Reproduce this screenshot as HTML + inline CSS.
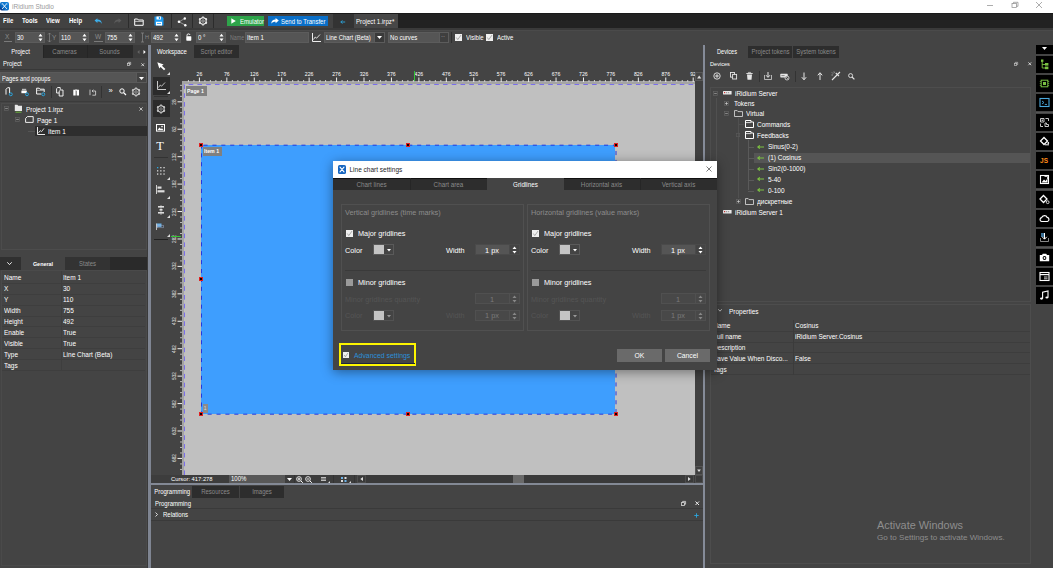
<!DOCTYPE html>
<html><head><meta charset="utf-8"><title>iRidium Studio</title>
<style>
html,body{margin:0;padding:0;}
body{width:1053px;height:568px;overflow:hidden;position:relative;background:#444;font-family:"Liberation Sans",sans-serif;}
div,span.t,svg{position:absolute;display:block;box-sizing:border-box;}
span.t{white-space:pre;}
svg{overflow:visible;}
</style></head><body>
<div style="left:0px;top:0px;width:1053px;height:13px;background:#ffffff;"></div>
<svg style="left:0;top:2px" width="9" height="8.6" viewBox="0 0 9 8.6"><defs><linearGradient id="lg1" x1="1" y1="0" x2="0" y2="1"><stop offset="0" stop-color="#1283dc"/><stop offset="0.65" stop-color="#0a6cc4"/><stop offset="1" stop-color="#0a1f6e"/></linearGradient></defs><rect x="0" y="0" width="9" height="8.6" rx="1.8" fill="url(#lg1)"/><path d="M2.4 1.8 L6.6 6.6 M6.6 1.8 L2.4 6.6" stroke="#fff" stroke-width="0.9" stroke-linecap="round"/><path d="M1.8 2.4 L3 1.2 M6 1.2 L7.2 2.4 M5.9 7.2 L7.2 5.9" stroke="#cfe6fa" stroke-width="0.6"/></svg>
<span class="t" style="left:12px;top:2.5px;font-size:6.5px;line-height:8px;color:#9a9a9a;">iRidium Studio</span>
<svg style="left:986.5px;top:1.2px;" width="60" height="8" viewBox="0 0 60 8"><path d="M0 4.5h6" stroke="#8a8a8a" stroke-width="0.7" fill="none"/><rect x="25" y="2.5" width="4.5" height="4" stroke="#8a8a8a" stroke-width="0.7" fill="none"/><path d="M26.5 2.5v-1.2h4.5v4h-1.5" stroke="#8a8a8a" stroke-width="0.7" fill="none"/><path d="M49 1l6 6M55 1l-6 6" stroke="#8a8a8a" stroke-width="0.7" fill="none"/></svg>
<div style="left:0px;top:13px;width:1053px;height:17px;background:#222222;"></div>
<div style="left:0px;top:13px;width:1053px;height:1px;background:#1a1a1a;"></div>
<div style="left:0px;top:14px;width:333px;height:15px;background:#424242;"></div>
<div style="left:333px;top:14px;width:21px;height:14px;background:#333333;"></div>
<div style="left:354px;top:14px;width:44px;height:14px;background:#474747;"></div>
<div style="left:0px;top:28px;width:1053px;height:2px;background:#3a3a3a;"></div>
<span class="t" style="left:3px;top:17.0px;font-size:6.5px;line-height:8px;color:#ffffff;font-weight:700;transform:scaleX(0.93);transform-origin:left center;">File</span>
<span class="t" style="left:22px;top:17.0px;font-size:6.5px;line-height:8px;color:#ffffff;font-weight:700;transform:scaleX(0.93);transform-origin:left center;">Tools</span>
<span class="t" style="left:46px;top:17.0px;font-size:6.5px;line-height:8px;color:#ffffff;font-weight:700;transform:scaleX(0.93);transform-origin:left center;">View</span>
<span class="t" style="left:69px;top:17.0px;font-size:6.5px;line-height:8px;color:#ffffff;font-weight:700;transform:scaleX(0.93);transform-origin:left center;">Help</span>
<svg style="left:94px;top:18px;" width="9" height="6.5" viewBox="0 0 12 9"><path d="M0.5 3.5 L4.5 0.3 V2.2 C8 2.2 10.5 4 10.8 8.2 C9.5 5.8 7.5 5 4.5 5 V6.8 Z" fill="#3daee9"/></svg>
<svg style="left:113px;top:18px;" width="9" height="6.5" viewBox="0 0 12 9"><path d="M11.5 3.5 L7.5 0.3 V2.2 C4 2.2 1.5 4 1.2 8.2 C2.5 5.8 4.5 5 7.5 5 V6.8 Z" fill="#5c5c5c"/></svg>
<div style="left:128px;top:14px;width:1px;height:14px;background:#2c2c2c;"></div>
<svg style="left:134px;top:17.5px;" width="10" height="8" viewBox="0 0 10 8"><path d="M0.7 7.3 V1 H3.6 L4.4 2 H9.2 V7.3 Z" fill="none" stroke="#fff" stroke-width="1" stroke-linejoin="round"/><path d="M0.7 3.4 H9.2" stroke="#ddd" stroke-width="0.8"/></svg>
<svg style="left:154px;top:16px;" width="10" height="10" viewBox="0 0 10 10"><path d="M0.5 0.5 H8 L9.5 2 V9.5 H0.5 Z" fill="#1e9bf0"/><rect x="2.5" y="0.5" width="4.5" height="3" fill="#fff"/><rect x="4.8" y="1" width="1.3" height="2" fill="#1e9bf0"/><rect x="2" y="5.8" width="6" height="3.7" fill="#fff"/><rect x="3" y="7" width="4" height="0.8" fill="#1e9bf0"/></svg>
<div style="left:171px;top:14px;width:1px;height:14px;background:#2c2c2c;"></div>
<svg style="left:176.5px;top:16.5px;" width="11" height="10" viewBox="0 0 11 10"><path d="M2 4.8 L7.6 1.6 M2 4.8 L8 8" stroke="#ccc" stroke-width="0.6"/><circle cx="2" cy="4.8" r="1.3" fill="#fff"/><circle cx="7.8" cy="1.5" r="1.2" fill="#fff"/><circle cx="8.3" cy="8.2" r="1.2" fill="#fff"/></svg>
<div style="left:192px;top:14px;width:1px;height:14px;background:#2c2c2c;"></div>
<svg style="left:198px;top:16px;" width="10" height="10" viewBox="0 0 10 10"><path d="M8.03 6.75L8.90 7.25M5.00 8.50L5.00 9.50M1.97 6.75L1.10 7.25M1.97 3.25L1.10 2.75M5.00 1.50L5.00 0.50M8.03 3.25L8.90 2.75" stroke="#fff" stroke-width="1.5"/><circle cx="5" cy="5" r="3.2" fill="none" stroke="#fff" stroke-width="1.05"/><circle cx="5" cy="5" r="1.25" fill="none" stroke="#fff" stroke-width="0.6" stroke-opacity="0.85"/></svg>
<div style="left:213px;top:14px;width:1px;height:14px;background:#2c2c2c;"></div>
<div style="left:227px;top:16px;width:37px;height:10px;background:#2ea44a;"></div>
<svg style="left:231px;top:18px;" width="5" height="6" viewBox="0 0 5 6"><path d="M0.3 0.2 L4.8 3 L0.3 5.8 Z" fill="#fff"/></svg>
<span class="t" style="left:240px;top:17.5px;font-size:6.4px;line-height:8px;color:#ffffff;transform:scaleX(0.94);transform-origin:left center;">Emulator</span>
<div style="left:268px;top:16px;width:60px;height:10px;background:#0a6fc8;"></div>
<svg style="left:271px;top:18px;" width="8" height="6" viewBox="0 0 8 6"><path d="M7.8 2.6 L4.6 0 V1.6 C2 1.6 0.4 3 0.2 5.8 C1.2 4.2 2.6 3.7 4.6 3.7 V5.3 Z" fill="#fff"/></svg>
<span class="t" style="left:281px;top:17.5px;font-size:6.4px;line-height:8px;color:#ffffff;transform:scaleX(0.94);transform-origin:left center;">Send to Transfer</span>
<svg style="left:339.5px;top:19.5px;" width="5.5" height="4" viewBox="0 0 5.5 4"><path d="M5.2 2 H0.8 M2.4 0.4 L0.8 2 L2.4 3.6" stroke="#2aa7e0" stroke-width="0.9" fill="none"/></svg>
<span class="t" style="left:356px;top:17.0px;font-size:6.7px;line-height:9px;color:#ffffff;transform:scaleX(0.92);transform-origin:left center;">Project 1.irpz*</span>
<div style="left:0px;top:30px;width:1053px;height:15px;background:#444444;"></div>
<div style="left:0px;top:30px;width:1053px;height:1px;background:#4a4a4a;"></div>
<span class="t" style="left:5px;top:33.0px;font-size:6.5px;line-height:8px;color:#8a8a8a;">X</span>
<div style="left:4px;top:41px;width:8px;height:1px;background:#7a7a7a;"></div>
<div style="left:15px;top:32px;width:30px;height:11px;background:#555555;border:1px solid #5c5c5c;"></div>
<span class="t" style="left:17px;top:34.4px;font-size:6.6px;line-height:8px;color:#ffffff;transform:scaleX(0.92);transform-origin:left center;">30</span>
<svg style="left:38px;top:33px;" width="5" height="9" viewBox="0 0 5 9"><path d="M0.5 3.4 L2.5 0.8 L4.5 3.4 Z M0.5 5.6 L2.5 8.2 L4.5 5.6 Z" fill="#fff"/></svg>
<svg style="left:48px;top:33px;" width="3" height="9" viewBox="0 0 3 9"><path d="M1.5 0v9M0 1.5L1.5 0L3 1.5M0 7.5L1.5 9L3 7.5" stroke="#8a8a8a" stroke-width="0.7" fill="none"/></svg>
<span class="t" style="left:52px;top:33.5px;font-size:6.5px;line-height:8px;color:#8a8a8a;">Y</span>
<div style="left:59px;top:32px;width:30px;height:11px;background:#555555;border:1px solid #5c5c5c;"></div>
<span class="t" style="left:61px;top:34.4px;font-size:6.6px;line-height:8px;color:#ffffff;transform:scaleX(0.92);transform-origin:left center;">110</span>
<svg style="left:82px;top:33px;" width="5" height="9" viewBox="0 0 5 9"><path d="M0.5 3.4 L2.5 0.8 L4.5 3.4 Z M0.5 5.6 L2.5 8.2 L4.5 5.6 Z" fill="#fff"/></svg>
<span class="t" style="left:95px;top:32.5px;font-size:6.5px;line-height:8px;color:#8a8a8a;">W</span>
<div style="left:94px;top:41px;width:9px;height:1px;background:#7a7a7a;"></div>
<div style="left:105px;top:32px;width:30px;height:11px;background:#555555;border:1px solid #5c5c5c;"></div>
<span class="t" style="left:107px;top:34.4px;font-size:6.6px;line-height:8px;color:#ffffff;transform:scaleX(0.92);transform-origin:left center;">755</span>
<svg style="left:128px;top:33px;" width="5" height="9" viewBox="0 0 5 9"><path d="M0.5 3.4 L2.5 0.8 L4.5 3.4 Z M0.5 5.6 L2.5 8.2 L4.5 5.6 Z" fill="#fff"/></svg>
<svg style="left:141px;top:33px;" width="3" height="9" viewBox="0 0 3 9"><path d="M1.5 0v9M0 0h3M0 9h3" stroke="#8a8a8a" stroke-width="0.7" fill="none"/></svg>
<span class="t" style="left:145px;top:34.0px;font-size:5.5px;line-height:7px;color:#8a8a8a;">H</span>
<div style="left:151px;top:32px;width:30px;height:11px;background:#555555;border:1px solid #5c5c5c;"></div>
<span class="t" style="left:153px;top:34.4px;font-size:6.6px;line-height:8px;color:#ffffff;transform:scaleX(0.92);transform-origin:left center;">492</span>
<svg style="left:174px;top:33px;" width="5" height="9" viewBox="0 0 5 9"><path d="M0.5 3.4 L2.5 0.8 L4.5 3.4 Z M0.5 5.6 L2.5 8.2 L4.5 5.6 Z" fill="#fff"/></svg>
<svg style="left:186px;top:34px;" width="6" height="7" viewBox="0 0 6 7"><rect x="0.3" y="2.2" width="5" height="4.5" rx="0.6" fill="#fff"/><path d="M1 2.4 V1.4 A1.4 1.2 0 0 1 4 1 " stroke="#fff" stroke-width="0.9" fill="none"/></svg>
<div style="left:196px;top:32px;width:30px;height:11px;background:#555555;border:1px solid #5c5c5c;"></div>
<span class="t" style="left:198px;top:34.4px;font-size:6.6px;line-height:8px;color:#ffffff;transform:scaleX(0.92);transform-origin:left center;">0 °</span>
<svg style="left:219px;top:33px;" width="5" height="9" viewBox="0 0 5 9"><path d="M0.5 3.4 L2.5 0.8 L4.5 3.4 Z M0.5 5.6 L2.5 8.2 L4.5 5.6 Z" fill="#fff"/></svg>
<span class="t" style="left:229.5px;top:33.8px;font-size:6.3px;line-height:8px;color:#7c7c7c;transform:scaleX(0.84);transform-origin:left center;">Name</span>
<div style="left:245px;top:32px;width:64px;height:11px;background:#555555;border:1px solid #5c5c5c;"></div>
<span class="t" style="left:247px;top:34.2px;font-size:6.6px;line-height:8px;color:#ffffff;transform:scaleX(0.92);transform-origin:left center;">Item 1</span>
<svg style="left:312px;top:33px;" width="9" height="9" viewBox="0 0 9 9"><path d="M0.5 0 V8.5 H9" stroke="#fff" stroke-width="0.9" fill="none"/><path d="M1.5 6.5 L3.2 4 L4.6 5.2 L8 1.5" stroke="#fff" stroke-width="0.8" fill="none"/></svg>
<div style="left:324px;top:32px;width:61px;height:11px;background:#555555;border:1px solid #5c5c5c;"></div>
<span class="t" style="left:325.5px;top:34.2px;font-size:6.4px;line-height:8px;color:#ffffff;transform:scaleX(0.92);transform-origin:left center;">Line Chart (Beta)</span>
<div style="left:374px;top:32px;width:11px;height:11px;background:#3a3a3a;border:1px solid #5c5c5c;"></div>
<svg style="left:377px;top:36px;" width="5" height="3" viewBox="0 0 5 3"><path d="M0 0 H5 L2.5 3 Z" fill="#fff"/></svg>
<div style="left:388px;top:32px;width:61px;height:11px;background:#555555;border:1px solid #5c5c5c;"></div>
<span class="t" style="left:390px;top:34.2px;font-size:6.6px;line-height:8px;color:#ffffff;transform:scaleX(0.92);transform-origin:left center;">No curves</span>
<div style="left:439px;top:32px;width:10px;height:11px;background:#3f3f3f;border:1px solid #5c5c5c;"></div>
<span class="t" style="left:441px;top:33.0px;font-size:6.4px;line-height:8px;color:#aaaaaa;transform:scaleX(0.94);transform-origin:left center;">··</span>
<div style="left:451px;top:32px;width:1px;height:11px;background:#303030;"></div>
<div style="left:455px;top:33.5px;width:7px;height:7px;background:#f0f0f0;"></div>
<svg style="left:455px;top:33.5px;" width="7" height="7" viewBox="0 0 7 7"><path d="M1.3 3.5 L2.8000000000000003 5.6000000000000005 L6 1.05" stroke="#999" stroke-width="0.8" fill="none"/></svg>
<span class="t" style="left:466px;top:34.0px;font-size:6.4px;line-height:8px;color:#ffffff;transform:scaleX(0.94);transform-origin:left center;">Visible</span>
<div style="left:486px;top:33.5px;width:7px;height:7px;background:#f0f0f0;"></div>
<svg style="left:486px;top:33.5px;" width="7" height="7" viewBox="0 0 7 7"><path d="M1.3 3.5 L2.8000000000000003 5.6000000000000005 L6 1.05" stroke="#999" stroke-width="0.8" fill="none"/></svg>
<span class="t" style="left:497px;top:34.0px;font-size:6.4px;line-height:8px;color:#ffffff;transform:scaleX(0.94);transform-origin:left center;">Active</span>
<div style="left:0px;top:45px;width:1053px;height:1px;background:#3e3e3e;"></div>
<div style="left:0px;top:45px;width:148px;height:13px;background:#2b2b2b;"></div>
<div style="left:0px;top:45px;width:43px;height:13px;background:#444444;"></div>
<div style="left:43px;top:45px;width:1px;height:13px;background:#252525;"></div>
<div style="left:87px;top:45px;width:1px;height:13px;background:#252525;"></div>
<span class="t" style="left:-1px;top:48.0px;font-size:6.4px;line-height:8px;color:#ffffff;width:43px;text-align:center;transform:scaleX(0.94);transform-origin:center center;">Project</span>
<span class="t" style="left:43px;top:48.0px;font-size:6.4px;line-height:8px;color:#8a8a8a;width:43px;text-align:center;transform:scaleX(0.94);transform-origin:center center;">Cameras</span>
<span class="t" style="left:87px;top:48.0px;font-size:6.4px;line-height:8px;color:#8a8a8a;width:45px;text-align:center;transform:scaleX(0.94);transform-origin:center center;">Sounds</span>
<div style="left:133px;top:45px;width:15px;height:13px;background:#3c3c3c;"></div>
<svg style="left:137px;top:50px;" width="3" height="4" viewBox="0 0 3 4"><path d="M2.5 0 L0.3 2 L2.5 4 Z" fill="#666"/></svg>
<svg style="left:143px;top:50px;" width="3" height="4" viewBox="0 0 3 4"><path d="M0.5 0 L2.7 2 L0.5 4 Z" fill="#fff"/></svg>
<span class="t" style="left:3px;top:60.0px;font-size:6.4px;line-height:8px;color:#ffffff;transform:scaleX(0.94);transform-origin:left center;">Project</span>
<svg style="left:126.5px;top:62px;" width="4" height="4" viewBox="0 0 5 5"><rect x="0.4" y="1.6" width="3" height="2.8" fill="none" stroke="#ddd" stroke-width="0.8"/><path d="M1.6 1.6 V0.4 H4.6 V3.2 H3.4" fill="none" stroke="#ddd" stroke-width="0.8"/></svg>
<svg style="left:141px;top:62.5px;" width="3.5" height="3.5" viewBox="0 0 4.5 4.5"><path d="M0.5 0.5 L4 4 M4 0.5 L0.5 4" stroke="#eee" stroke-width="1" fill="none"/></svg>
<div style="left:0px;top:69px;width:148px;height:1px;background:#383838;"></div>
<div style="left:0px;top:72px;width:147px;height:11px;background:#555555;border:1px solid #5a5a5a;"></div>
<span class="t" style="left:1.5px;top:74.5px;font-size:6.3px;line-height:8px;color:#ffffff;transform:scaleX(0.92);transform-origin:left center;">Pages and popups</span>
<div style="left:136px;top:72px;width:11px;height:11px;background:#444;border:1px solid #5a5a5a;"></div>
<svg style="left:139px;top:77px;" width="5" height="3" viewBox="0 0 5 3"><path d="M0 0 H5 L2.5 3 Z" fill="#fff"/></svg>
<svg style="left:4.5px;top:87px;" width="9" height="10" viewBox="0 0 9 10"><path d="M1 7.6 V2.3 L2.6 0.7 H4.6 V6" fill="none" stroke="#fff" stroke-width="0.95"/><circle cx="5.8" cy="7.3" r="1.45" fill="#444" stroke="#2aa7e0" stroke-width="1"/></svg>
<svg style="left:20px;top:87px;" width="10" height="10" viewBox="0 0 10 10"><rect x="2" y="1.8" width="4.2" height="1.6" fill="#bbb"/><rect x="1.4" y="3.6" width="5.4" height="2.6" fill="#fff"/><circle cx="7" cy="7.3" r="1.45" fill="#444" stroke="#2aa7e0" stroke-width="1"/></svg>
<svg style="left:36px;top:87px;" width="11" height="10" viewBox="0 0 11 10"><path d="M0.6 7 V1.2 H3.2 L4 2.2 H8.2 V5" fill="none" stroke="#fff" stroke-width="0.95"/><path d="M0.6 3.3 H8.2" stroke="#ddd" stroke-width="0.7"/><path d="M0.6 7 H5.4" stroke="#fff" stroke-width="0.95"/><circle cx="7.3" cy="7.3" r="1.45" fill="#444" stroke="#2aa7e0" stroke-width="1"/></svg>
<div style="left:51px;top:86px;width:1px;height:12px;background:#333;"></div>
<svg style="left:55.5px;top:87.3px;" width="9" height="10" viewBox="0 0 9 10"><path d="M0.6 6 V1.6 L1.8 0.5 H4.2 V2.6" fill="none" stroke="#fff" stroke-width="0.9"/><path d="M3.2 9 V4.2 L4.4 3 H7 V9 Z" fill="#444" stroke="#fff" stroke-width="0.9"/><path d="M0.6 6 H3" stroke="#fff" stroke-width="0.9"/></svg>
<svg style="left:73px;top:88.5px;" width="7" height="7" viewBox="0 0 7 7"><path d="M0.3 6.4 V0.8 H2.7 V6.4 Z M3.6 6.4 V0.8 H6 V6.4 Z" fill="#fff"/><path d="M2.2 0.4 H4.2 V2 H2.2 Z" fill="#ddd"/></svg>
<svg style="left:88.5px;top:88.5px;" width="8" height="7" viewBox="0 0 8 7"><path d="M1 0.6 V6.2" stroke="#ddd" stroke-width="0.8"/><path d="M3 2 H6.6 V6.2 H3.4" fill="none" stroke="#ddd" stroke-width="0.8"/><path d="M4.4 0.6 L3 2 L4.4 3.4" fill="none" stroke="#ddd" stroke-width="0.7"/></svg>
<div style="left:101px;top:86px;width:1px;height:12px;background:#333;"></div>
<span class="t" style="left:108.5px;top:86.3px;font-size:7.6px;line-height:10px;color:#ffffff;">»</span>
<svg style="left:119px;top:88px;" width="8" height="8" viewBox="0 0 8 8"><circle cx="3" cy="3" r="2.2" fill="none" stroke="#fff" stroke-width="1"/><path d="M4.6 4.6 L7 7" stroke="#fff" stroke-width="1.3"/></svg>
<svg style="left:131px;top:87px;" width="10" height="10" viewBox="0 0 10 10"><path d="M8.03 6.75L8.90 7.25M5.00 8.50L5.00 9.50M1.97 6.75L1.10 7.25M1.97 3.25L1.10 2.75M5.00 1.50L5.00 0.50M8.03 3.25L8.90 2.75" stroke="#ddd" stroke-width="1.5"/><circle cx="5" cy="5" r="3.2" fill="none" stroke="#ddd" stroke-width="1.05"/><circle cx="5" cy="5" r="1.25" fill="none" stroke="#ddd" stroke-width="0.6" stroke-opacity="0.85"/></svg>
<div style="left:0px;top:101px;width:148px;height:1px;background:#3b3b3b;"></div>
<div style="left:1px;top:103px;width:146px;height:147px;border:1px solid #4c4c4c;"></div>
<svg style="left:4px;top:106px;" width="5" height="5" viewBox="0 0 5 5"><rect x="0.4" y="0.4" width="4.2" height="4.2" fill="none" stroke="#666" stroke-width="0.6"/><path d="M1.2 2.5 H3.8" stroke="#999" stroke-width="0.8"/></svg>
<svg style="left:14px;top:104px;" width="9" height="9" viewBox="0 0 9 9"><path d="M0.8 7 V0.8 H3.4 L4.2 1.8 H8 V7 Z" fill="#e8e8e8"/><path d="M1.5 8.2 H7.5" stroke="#6cbf3a" stroke-width="0.9"/></svg>
<span class="t" style="left:26px;top:105.1px;font-size:6.8px;line-height:9px;color:#ffffff;transform:scaleX(0.94);transform-origin:left center;">Project 1.irpz</span>
<svg style="left:139px;top:107px;" width="4" height="4" viewBox="0 0 4 4"><path d="M0.4 0.4 L3.6 3.6 M3.6 0.4 L0.4 3.6" stroke="#ddd" stroke-width="0.8"/></svg>
<svg style="left:15px;top:117px;" width="5" height="5" viewBox="0 0 5 5"><rect x="0.4" y="0.4" width="4.2" height="4.2" fill="none" stroke="#666" stroke-width="0.6"/><path d="M1.2 2.5 H3.8" stroke="#999" stroke-width="0.8"/></svg>
<svg style="left:25px;top:116px;" width="9" height="7" viewBox="0 0 9 7"><path d="M0.6 6.4 V2.4 L2.4 0.6 H8.2 V6.4 Z" fill="none" stroke="#fff" stroke-width="0.9"/></svg>
<span class="t" style="left:37px;top:116.1px;font-size:6.8px;line-height:9px;color:#ffffff;transform:scaleX(0.94);transform-origin:left center;">Page 1</span>
<div style="left:35px;top:125.6px;width:112px;height:10.6px;background:#2e2e2e;"></div>
<div style="left:28px;top:131px;width:7px;height:1px;background:#555;"></div>
<svg style="left:37px;top:127px;" width="8" height="8" viewBox="0 0 8 8"><path d="M0.5 0 V7.5 H8" stroke="#fff" stroke-width="0.9" fill="none"/><path d="M1.5 5.8 L3.2 3.6 L4.6 4.6 L7 1.4" stroke="#fff" stroke-width="0.8" fill="none"/></svg>
<span class="t" style="left:48px;top:127.0px;font-size:6.8px;line-height:9px;color:#ffffff;transform:scaleX(0.94);transform-origin:left center;">Item 1</span>
<div style="left:147px;top:45px;width:1px;height:523px;background:#3a3a3a;"></div>
<div style="left:148px;top:45px;width:3px;height:523px;background:#7f8592;"></div>
<div style="left:0px;top:257px;width:147px;height:13px;background:#2a2a2a;"></div>
<div style="left:0px;top:257px;width:21px;height:13px;background:#303030;"></div>
<svg style="left:7px;top:262px;" width="5" height="3" viewBox="0 0 5 3"><path d="M0.3 0.3 L2.5 2.6 L4.7 0.3" stroke="#fff" stroke-width="0.9" fill="none"/></svg>
<div style="left:21px;top:257px;width:44px;height:13px;background:#444444;"></div>
<span class="t" style="left:21px;top:259.7px;font-size:5.9px;line-height:8px;color:#ffffff;font-weight:700;width:44px;text-align:center;transform:scaleX(0.92);transform-origin:center center;">General</span>
<div style="left:65px;top:257px;width:45px;height:13px;background:#333333;"></div>
<span class="t" style="left:65px;top:259.5px;font-size:6.4px;line-height:8px;color:#8a8a8a;width:45px;text-align:center;transform:scaleX(0.94);transform-origin:center center;">States</span>
<span class="t" style="left:4px;top:272.9px;font-size:6.9px;line-height:9px;color:#ffffff;transform:scaleX(0.94);transform-origin:left center;">Name</span>
<span class="t" style="left:63px;top:272.9px;font-size:6.9px;line-height:9px;color:#ffffff;transform:scaleX(0.94);transform-origin:left center;">Item 1</span>
<div style="left:1px;top:283px;width:144px;height:1px;background:#3e3e3e;"></div>
<span class="t" style="left:4px;top:283.8px;font-size:6.9px;line-height:9px;color:#ffffff;transform:scaleX(0.94);transform-origin:left center;">X</span>
<span class="t" style="left:63px;top:283.8px;font-size:6.9px;line-height:9px;color:#ffffff;transform:scaleX(0.94);transform-origin:left center;">30</span>
<div style="left:1px;top:294px;width:144px;height:1px;background:#3e3e3e;"></div>
<span class="t" style="left:4px;top:294.8px;font-size:6.9px;line-height:9px;color:#ffffff;transform:scaleX(0.94);transform-origin:left center;">Y</span>
<span class="t" style="left:63px;top:294.8px;font-size:6.9px;line-height:9px;color:#ffffff;transform:scaleX(0.94);transform-origin:left center;">110</span>
<div style="left:1px;top:305px;width:144px;height:1px;background:#3e3e3e;"></div>
<span class="t" style="left:4px;top:305.8px;font-size:6.9px;line-height:9px;color:#ffffff;transform:scaleX(0.94);transform-origin:left center;">Width</span>
<span class="t" style="left:63px;top:305.8px;font-size:6.9px;line-height:9px;color:#ffffff;transform:scaleX(0.94);transform-origin:left center;">755</span>
<div style="left:1px;top:316px;width:144px;height:1px;background:#3e3e3e;"></div>
<span class="t" style="left:4px;top:316.7px;font-size:6.9px;line-height:9px;color:#ffffff;transform:scaleX(0.94);transform-origin:left center;">Height</span>
<span class="t" style="left:63px;top:316.7px;font-size:6.9px;line-height:9px;color:#ffffff;transform:scaleX(0.94);transform-origin:left center;">492</span>
<div style="left:1px;top:326px;width:144px;height:1px;background:#3e3e3e;"></div>
<span class="t" style="left:4px;top:327.6px;font-size:6.9px;line-height:9px;color:#ffffff;transform:scaleX(0.94);transform-origin:left center;">Enable</span>
<span class="t" style="left:63px;top:327.6px;font-size:6.9px;line-height:9px;color:#ffffff;transform:scaleX(0.94);transform-origin:left center;">True</span>
<div style="left:1px;top:337px;width:144px;height:1px;background:#3e3e3e;"></div>
<span class="t" style="left:4px;top:338.6px;font-size:6.9px;line-height:9px;color:#ffffff;transform:scaleX(0.94);transform-origin:left center;">Visible</span>
<span class="t" style="left:63px;top:338.6px;font-size:6.9px;line-height:9px;color:#ffffff;transform:scaleX(0.94);transform-origin:left center;">True</span>
<div style="left:1px;top:348px;width:144px;height:1px;background:#3e3e3e;"></div>
<span class="t" style="left:4px;top:349.5px;font-size:6.9px;line-height:9px;color:#ffffff;transform:scaleX(0.94);transform-origin:left center;">Type</span>
<span class="t" style="left:63px;top:349.5px;font-size:6.9px;line-height:9px;color:#ffffff;transform:scaleX(0.94);transform-origin:left center;">Line Chart (Beta)</span>
<div style="left:1px;top:359px;width:144px;height:1px;background:#3e3e3e;"></div>
<span class="t" style="left:4px;top:360.5px;font-size:6.9px;line-height:9px;color:#ffffff;transform:scaleX(0.94);transform-origin:left center;">Tags</span>
<span class="t" style="left:63px;top:360.5px;font-size:6.9px;line-height:9px;color:#ffffff;transform:scaleX(0.94);transform-origin:left center;"></span>
<div style="left:1px;top:370px;width:144px;height:1px;background:#3e3e3e;"></div>
<div style="left:61px;top:271px;width:1px;height:99px;background:#3e3e3e;"></div>
<div style="left:1px;top:270px;width:146px;height:296px;border:1px solid #4a4a4a;"></div>
<div style="left:151px;top:45px;width:552px;height:523px;background:#444444;"></div>
<div style="left:153px;top:45px;width:38px;height:13px;background:#444444;"></div>
<span class="t" style="left:153px;top:47.5px;font-size:6.4px;line-height:8px;color:#ffffff;width:38px;text-align:center;transform:scaleX(0.94);transform-origin:center center;">Workspace</span>
<div style="left:194px;top:45px;width:45px;height:13px;background:#2d2d2d;"></div>
<span class="t" style="left:194px;top:47.8px;font-size:6.4px;line-height:8px;color:#8a8a8a;width:45px;text-align:center;transform:scaleX(0.94);transform-origin:center center;">Script editor</span>
<svg style="left:157px;top:62px;" width="9" height="8.5" viewBox="0 0 9 8.5"><path d="M0.3 0.3 L6.6 2.4 L4.9 3.7 L8.4 7 L7 8.3 L3.6 4.9 L2.3 6.6 Z" fill="#fff"/></svg>
<svg style="left:167px;top:72px;" width="3" height="3" viewBox="0 0 3 3"><path d="M3 0 V3 H0 Z" fill="#ddd"/></svg>
<div style="left:152.5px;top:77px;width:17px;height:17.5px;background:#2b2b2b;"></div>
<svg style="left:157px;top:81px;" width="9" height="9" viewBox="0 0 9 9"><path d="M0.5 0 V8.5 H9" stroke="#ddd" stroke-width="0.9" fill="none"/><path d="M1.5 6.5 L3.2 4 L4.6 5.2 L8 1.5" stroke="#ddd" stroke-width="0.8" fill="none"/></svg>
<svg style="left:167px;top:91px;" width="3" height="3" viewBox="0 0 3 3"><path d="M3 0 V3 H0 Z" fill="#ddd"/></svg>
<div style="left:154px;top:96px;width:14px;height:1px;background:#333;"></div>
<div style="left:152.5px;top:100px;width:17px;height:17px;background:#2b2b2b;"></div>
<svg style="left:156px;top:103.7px;" width="10" height="10" viewBox="0 0 10 10"><path d="M8.03 6.75L8.90 7.25M5.00 8.50L5.00 9.50M1.97 6.75L1.10 7.25M1.97 3.25L1.10 2.75M5.00 1.50L5.00 0.50M8.03 3.25L8.90 2.75" stroke="#ddd" stroke-width="1.5"/><circle cx="5" cy="5" r="3.2" fill="none" stroke="#ddd" stroke-width="1.05"/><circle cx="5" cy="5" r="1.25" fill="none" stroke="#ddd" stroke-width="0.6" stroke-opacity="0.85"/></svg>
<svg style="left:156px;top:124px;" width="9" height="8" viewBox="0 0 9 8"><rect x="0.5" y="0.5" width="8" height="6.6" fill="none" stroke="#fff" stroke-width="1"/><path d="M1.5 6 L3.5 3.6 L5 5 L6 4.2 L7.5 6 Z" fill="#fff"/><circle cx="6" cy="2.6" r="0.8" fill="#fff"/></svg>
<span class="t" style="left:156.2px;top:139.0px;font-size:12.4px;line-height:15px;color:#ffffff;font-family:'Liberation Serif',serif;">T</span>
<div style="left:154px;top:157px;width:14px;height:1px;background:#333;"></div>
<svg style="left:157px;top:167px;" width="9" height="9" viewBox="0 0 9 9"><rect x="0.0" y="0.0" width="1.3" height="1.3" fill="#2aa7e0"/><rect x="3.2" y="0.0" width="1.3" height="1.3" fill="#ddd"/><rect x="6.4" y="0.0" width="1.3" height="1.3" fill="#ddd"/><rect x="0.0" y="3.2" width="1.3" height="1.3" fill="#ddd"/><rect x="3.2" y="3.2" width="1.3" height="1.3" fill="#ddd"/><rect x="6.4" y="3.2" width="1.3" height="1.3" fill="#ddd"/><rect x="0.0" y="6.4" width="1.3" height="1.3" fill="#ddd"/><rect x="3.2" y="6.4" width="1.3" height="1.3" fill="#ddd"/><rect x="6.4" y="6.4" width="1.3" height="1.3" fill="#ddd"/></svg>
<svg style="left:167px;top:177px;" width="3" height="3" viewBox="0 0 3 3"><path d="M3 0 V3 H0 Z" fill="#ddd"/></svg>
<svg style="left:156px;top:185px;" width="10" height="9" viewBox="0 0 10 9"><path d="M0.5 0 V9" stroke="#ddd" stroke-width="0.9"/><rect x="1.5" y="1.5" width="4" height="2.2" fill="#ddd"/><rect x="1.5" y="5.2" width="7" height="2.2" fill="#ddd"/></svg>
<svg style="left:167px;top:196px;" width="3" height="3" viewBox="0 0 3 3"><path d="M3 0 V3 H0 Z" fill="#ddd"/></svg>
<svg style="left:157px;top:204.5px;" width="8" height="10" viewBox="0 0 8 10"><rect x="1" y="1" width="6" height="1.6" fill="#ddd"/><rect x="2.5" y="4" width="3" height="1.6" fill="#ddd"/><rect x="1" y="7" width="6" height="1.6" fill="#ddd"/><path d="M4 0 V10" stroke="#ddd" stroke-width="0.6"/></svg>
<svg style="left:167px;top:215px;" width="3" height="3" viewBox="0 0 3 3"><path d="M3 0 V3 H0 Z" fill="#ddd"/></svg>
<svg style="left:156px;top:223px;" width="9" height="9" viewBox="0 0 9 9"><rect x="0.5" y="0.5" width="5" height="3.4" fill="#6db3e8"/><path d="M0.5 0.5 V7" stroke="#ddd" stroke-width="0.8"/><rect x="1.5" y="2.2" width="6" height="2.6" fill="none" stroke="#9ac" stroke-width="0.5"/></svg>
<svg style="left:167px;top:234px;" width="3" height="3" viewBox="0 0 3 3"><path d="M3 0 V3 H0 Z" fill="#ddd"/></svg>
<div style="left:154px;top:239px;width:14px;height:1px;background:#222;"></div>
<span class="t" style="left:189.4px;top:71.0px;font-size:5.2px;line-height:7px;color:#ffffff;width:20px;text-align:center;">26</span>
<span class="t" style="left:216.83px;top:71.0px;font-size:5.2px;line-height:7px;color:#ffffff;width:20px;text-align:center;">76</span>
<span class="t" style="left:244.26px;top:71.0px;font-size:5.2px;line-height:7px;color:#ffffff;width:20px;text-align:center;">126</span>
<span class="t" style="left:271.69px;top:71.0px;font-size:5.2px;line-height:7px;color:#ffffff;width:20px;text-align:center;">176</span>
<span class="t" style="left:299.12px;top:71.0px;font-size:5.2px;line-height:7px;color:#ffffff;width:20px;text-align:center;">226</span>
<span class="t" style="left:326.55px;top:71.0px;font-size:5.2px;line-height:7px;color:#ffffff;width:20px;text-align:center;">276</span>
<span class="t" style="left:353.98px;top:71.0px;font-size:5.2px;line-height:7px;color:#ffffff;width:20px;text-align:center;">326</span>
<span class="t" style="left:381.40999999999997px;top:71.0px;font-size:5.2px;line-height:7px;color:#ffffff;width:20px;text-align:center;">376</span>
<span class="t" style="left:408.84000000000003px;top:71.0px;font-size:5.2px;line-height:7px;color:#ffffff;width:20px;text-align:center;">426</span>
<span class="t" style="left:436.27px;top:71.0px;font-size:5.2px;line-height:7px;color:#ffffff;width:20px;text-align:center;">476</span>
<span class="t" style="left:463.70000000000005px;top:71.0px;font-size:5.2px;line-height:7px;color:#ffffff;width:20px;text-align:center;">526</span>
<span class="t" style="left:491.13px;top:71.0px;font-size:5.2px;line-height:7px;color:#ffffff;width:20px;text-align:center;">576</span>
<span class="t" style="left:518.56px;top:71.0px;font-size:5.2px;line-height:7px;color:#ffffff;width:20px;text-align:center;">626</span>
<span class="t" style="left:545.99px;top:71.0px;font-size:5.2px;line-height:7px;color:#ffffff;width:20px;text-align:center;">676</span>
<span class="t" style="left:573.42px;top:71.0px;font-size:5.2px;line-height:7px;color:#ffffff;width:20px;text-align:center;">726</span>
<span class="t" style="left:600.85px;top:71.0px;font-size:5.2px;line-height:7px;color:#ffffff;width:20px;text-align:center;">776</span>
<span class="t" style="left:628.28px;top:71.0px;font-size:5.2px;line-height:7px;color:#ffffff;width:20px;text-align:center;">826</span>
<span class="t" style="left:655.71px;top:71.0px;font-size:5.2px;line-height:7px;color:#ffffff;width:20px;text-align:center;">876</span>
<span class="t" style="left:683.14px;top:71.0px;font-size:5.2px;line-height:7px;color:#ffffff;width:20px;text-align:center;">92</span>
<div style="left:413.5px;top:71px;width:1px;height:11px;background:#35c435;"></div>
<span class="t" style="left:165px;top:97.8px;width:20px;height:8px;line-height:8px;font-size:4.8px;color:#e6e6e6;text-align:center;transform:rotate(-90deg);">28</span>
<span class="t" style="left:165px;top:125.2px;width:20px;height:8px;line-height:8px;font-size:4.8px;color:#e6e6e6;text-align:center;transform:rotate(-90deg);">82</span>
<span class="t" style="left:165px;top:152.7px;width:20px;height:8px;line-height:8px;font-size:4.8px;color:#e6e6e6;text-align:center;transform:rotate(-90deg);">132</span>
<span class="t" style="left:165px;top:180.1px;width:20px;height:8px;line-height:8px;font-size:4.8px;color:#e6e6e6;text-align:center;transform:rotate(-90deg);">182</span>
<span class="t" style="left:165px;top:207.5px;width:20px;height:8px;line-height:8px;font-size:4.8px;color:#e6e6e6;text-align:center;transform:rotate(-90deg);">232</span>
<span class="t" style="left:165px;top:234.9px;width:20px;height:8px;line-height:8px;font-size:4.8px;color:#e6e6e6;text-align:center;transform:rotate(-90deg);">282</span>
<span class="t" style="left:165px;top:262.4px;width:20px;height:8px;line-height:8px;font-size:4.8px;color:#e6e6e6;text-align:center;transform:rotate(-90deg);">332</span>
<span class="t" style="left:165px;top:289.8px;width:20px;height:8px;line-height:8px;font-size:4.8px;color:#e6e6e6;text-align:center;transform:rotate(-90deg);">382</span>
<span class="t" style="left:165px;top:317.2px;width:20px;height:8px;line-height:8px;font-size:4.8px;color:#e6e6e6;text-align:center;transform:rotate(-90deg);">432</span>
<span class="t" style="left:165px;top:344.7px;width:20px;height:8px;line-height:8px;font-size:4.8px;color:#e6e6e6;text-align:center;transform:rotate(-90deg);">482</span>
<span class="t" style="left:165px;top:372.1px;width:20px;height:8px;line-height:8px;font-size:4.8px;color:#e6e6e6;text-align:center;transform:rotate(-90deg);">532</span>
<span class="t" style="left:165px;top:399.5px;width:20px;height:8px;line-height:8px;font-size:4.8px;color:#e6e6e6;text-align:center;transform:rotate(-90deg);">582</span>
<span class="t" style="left:165px;top:427.0px;width:20px;height:8px;line-height:8px;font-size:4.8px;color:#e6e6e6;text-align:center;transform:rotate(-90deg);">632</span>
<span class="t" style="left:165px;top:454.4px;width:20px;height:8px;line-height:8px;font-size:4.8px;color:#e6e6e6;text-align:center;transform:rotate(-90deg);">682</span>
<div style="left:171px;top:236px;width:10px;height:1px;background:#35c435;"></div>
<div style="left:182px;top:81px;width:513px;height:394px;background:#a4a4a4;"></div>
<div style="left:184px;top:84px;width:511px;height:391px;background:#c0c0c0;"></div>
<svg style="left:0;top:0" width="1053" height="90"><rect x="187.93" y="80" width="1" height="2" fill="#cfcfcf"/><rect x="193.41" y="80" width="1" height="2" fill="#cfcfcf"/><rect x="198.90" y="77.5" width="1" height="4.5" fill="#f0f0f0"/><rect x="204.39" y="80" width="1" height="2" fill="#cfcfcf"/><rect x="209.87" y="80" width="1" height="2" fill="#cfcfcf"/><rect x="215.36" y="80" width="1" height="2" fill="#cfcfcf"/><rect x="220.85" y="80" width="1" height="2" fill="#cfcfcf"/><rect x="226.33" y="77.5" width="1" height="4.5" fill="#f0f0f0"/><rect x="231.82" y="80" width="1" height="2" fill="#cfcfcf"/><rect x="237.31" y="80" width="1" height="2" fill="#cfcfcf"/><rect x="242.79" y="80" width="1" height="2" fill="#cfcfcf"/><rect x="248.28" y="80" width="1" height="2" fill="#cfcfcf"/><rect x="253.77" y="77.5" width="1" height="4.5" fill="#f0f0f0"/><rect x="259.25" y="80" width="1" height="2" fill="#cfcfcf"/><rect x="264.74" y="80" width="1" height="2" fill="#cfcfcf"/><rect x="270.23" y="80" width="1" height="2" fill="#cfcfcf"/><rect x="275.71" y="80" width="1" height="2" fill="#cfcfcf"/><rect x="281.20" y="77.5" width="1" height="4.5" fill="#f0f0f0"/><rect x="286.69" y="80" width="1" height="2" fill="#cfcfcf"/><rect x="292.17" y="80" width="1" height="2" fill="#cfcfcf"/><rect x="297.66" y="80" width="1" height="2" fill="#cfcfcf"/><rect x="303.15" y="80" width="1" height="2" fill="#cfcfcf"/><rect x="308.63" y="77.5" width="1" height="4.5" fill="#f0f0f0"/><rect x="314.12" y="80" width="1" height="2" fill="#cfcfcf"/><rect x="319.61" y="80" width="1" height="2" fill="#cfcfcf"/><rect x="325.09" y="80" width="1" height="2" fill="#cfcfcf"/><rect x="330.58" y="80" width="1" height="2" fill="#cfcfcf"/><rect x="336.07" y="77.5" width="1" height="4.5" fill="#f0f0f0"/><rect x="341.55" y="80" width="1" height="2" fill="#cfcfcf"/><rect x="347.04" y="80" width="1" height="2" fill="#cfcfcf"/><rect x="352.53" y="80" width="1" height="2" fill="#cfcfcf"/><rect x="358.01" y="80" width="1" height="2" fill="#cfcfcf"/><rect x="363.50" y="77.5" width="1" height="4.5" fill="#f0f0f0"/><rect x="368.99" y="80" width="1" height="2" fill="#cfcfcf"/><rect x="374.47" y="80" width="1" height="2" fill="#cfcfcf"/><rect x="379.96" y="80" width="1" height="2" fill="#cfcfcf"/><rect x="385.45" y="80" width="1" height="2" fill="#cfcfcf"/><rect x="390.93" y="77.5" width="1" height="4.5" fill="#f0f0f0"/><rect x="396.42" y="80" width="1" height="2" fill="#cfcfcf"/><rect x="401.91" y="80" width="1" height="2" fill="#cfcfcf"/><rect x="407.39" y="80" width="1" height="2" fill="#cfcfcf"/><rect x="412.88" y="80" width="1" height="2" fill="#cfcfcf"/><rect x="418.37" y="77.5" width="1" height="4.5" fill="#f0f0f0"/><rect x="423.85" y="80" width="1" height="2" fill="#cfcfcf"/><rect x="429.34" y="80" width="1" height="2" fill="#cfcfcf"/><rect x="434.83" y="80" width="1" height="2" fill="#cfcfcf"/><rect x="440.31" y="80" width="1" height="2" fill="#cfcfcf"/><rect x="445.80" y="77.5" width="1" height="4.5" fill="#f0f0f0"/><rect x="451.29" y="80" width="1" height="2" fill="#cfcfcf"/><rect x="456.77" y="80" width="1" height="2" fill="#cfcfcf"/><rect x="462.26" y="80" width="1" height="2" fill="#cfcfcf"/><rect x="467.75" y="80" width="1" height="2" fill="#cfcfcf"/><rect x="473.24" y="77.5" width="1" height="4.5" fill="#f0f0f0"/><rect x="478.72" y="80" width="1" height="2" fill="#cfcfcf"/><rect x="484.21" y="80" width="1" height="2" fill="#cfcfcf"/><rect x="489.70" y="80" width="1" height="2" fill="#cfcfcf"/><rect x="495.18" y="80" width="1" height="2" fill="#cfcfcf"/><rect x="500.67" y="77.5" width="1" height="4.5" fill="#f0f0f0"/><rect x="506.16" y="80" width="1" height="2" fill="#cfcfcf"/><rect x="511.64" y="80" width="1" height="2" fill="#cfcfcf"/><rect x="517.13" y="80" width="1" height="2" fill="#cfcfcf"/><rect x="522.62" y="80" width="1" height="2" fill="#cfcfcf"/><rect x="528.10" y="77.5" width="1" height="4.5" fill="#f0f0f0"/><rect x="533.59" y="80" width="1" height="2" fill="#cfcfcf"/><rect x="539.08" y="80" width="1" height="2" fill="#cfcfcf"/><rect x="544.56" y="80" width="1" height="2" fill="#cfcfcf"/><rect x="550.05" y="80" width="1" height="2" fill="#cfcfcf"/><rect x="555.54" y="77.5" width="1" height="4.5" fill="#f0f0f0"/><rect x="561.02" y="80" width="1" height="2" fill="#cfcfcf"/><rect x="566.51" y="80" width="1" height="2" fill="#cfcfcf"/><rect x="572.00" y="80" width="1" height="2" fill="#cfcfcf"/><rect x="577.48" y="80" width="1" height="2" fill="#cfcfcf"/><rect x="582.97" y="77.5" width="1" height="4.5" fill="#f0f0f0"/><rect x="588.46" y="80" width="1" height="2" fill="#cfcfcf"/><rect x="593.94" y="80" width="1" height="2" fill="#cfcfcf"/><rect x="599.43" y="80" width="1" height="2" fill="#cfcfcf"/><rect x="604.92" y="80" width="1" height="2" fill="#cfcfcf"/><rect x="610.40" y="77.5" width="1" height="4.5" fill="#f0f0f0"/><rect x="615.89" y="80" width="1" height="2" fill="#cfcfcf"/><rect x="621.38" y="80" width="1" height="2" fill="#cfcfcf"/><rect x="626.86" y="80" width="1" height="2" fill="#cfcfcf"/><rect x="632.35" y="80" width="1" height="2" fill="#cfcfcf"/><rect x="637.84" y="77.5" width="1" height="4.5" fill="#f0f0f0"/><rect x="643.32" y="80" width="1" height="2" fill="#cfcfcf"/><rect x="648.81" y="80" width="1" height="2" fill="#cfcfcf"/><rect x="654.30" y="80" width="1" height="2" fill="#cfcfcf"/><rect x="659.78" y="80" width="1" height="2" fill="#cfcfcf"/><rect x="665.27" y="77.5" width="1" height="4.5" fill="#f0f0f0"/><rect x="670.76" y="80" width="1" height="2" fill="#cfcfcf"/><rect x="676.24" y="80" width="1" height="2" fill="#cfcfcf"/><rect x="681.73" y="80" width="1" height="2" fill="#cfcfcf"/><rect x="687.22" y="80" width="1" height="2" fill="#cfcfcf"/><rect x="692.70" y="77.5" width="1" height="4.5" fill="#f0f0f0"/></svg>
<svg style="left:0;top:0" width="200" height="480"><rect x="180" y="84.84" width="2" height="1" fill="#bdbdbd"/><rect x="180" y="90.33" width="2" height="1" fill="#bdbdbd"/><rect x="180" y="95.81" width="2" height="1" fill="#bdbdbd"/><rect x="177.5" y="101.30" width="4.5" height="1" fill="#f0f0f0"/><rect x="180" y="106.79" width="2" height="1" fill="#bdbdbd"/><rect x="180" y="112.27" width="2" height="1" fill="#bdbdbd"/><rect x="180" y="117.76" width="2" height="1" fill="#bdbdbd"/><rect x="180" y="123.25" width="2" height="1" fill="#bdbdbd"/><rect x="177.5" y="128.73" width="4.5" height="1" fill="#f0f0f0"/><rect x="180" y="134.22" width="2" height="1" fill="#bdbdbd"/><rect x="180" y="139.71" width="2" height="1" fill="#bdbdbd"/><rect x="180" y="145.19" width="2" height="1" fill="#bdbdbd"/><rect x="180" y="150.68" width="2" height="1" fill="#bdbdbd"/><rect x="177.5" y="156.17" width="4.5" height="1" fill="#f0f0f0"/><rect x="180" y="161.65" width="2" height="1" fill="#bdbdbd"/><rect x="180" y="167.14" width="2" height="1" fill="#bdbdbd"/><rect x="180" y="172.63" width="2" height="1" fill="#bdbdbd"/><rect x="180" y="178.11" width="2" height="1" fill="#bdbdbd"/><rect x="177.5" y="183.60" width="4.5" height="1" fill="#f0f0f0"/><rect x="180" y="189.09" width="2" height="1" fill="#bdbdbd"/><rect x="180" y="194.57" width="2" height="1" fill="#bdbdbd"/><rect x="180" y="200.06" width="2" height="1" fill="#bdbdbd"/><rect x="180" y="205.55" width="2" height="1" fill="#bdbdbd"/><rect x="177.5" y="211.03" width="4.5" height="1" fill="#f0f0f0"/><rect x="180" y="216.52" width="2" height="1" fill="#bdbdbd"/><rect x="180" y="222.01" width="2" height="1" fill="#bdbdbd"/><rect x="180" y="227.49" width="2" height="1" fill="#bdbdbd"/><rect x="180" y="232.98" width="2" height="1" fill="#bdbdbd"/><rect x="177.5" y="238.47" width="4.5" height="1" fill="#f0f0f0"/><rect x="180" y="243.95" width="2" height="1" fill="#bdbdbd"/><rect x="180" y="249.44" width="2" height="1" fill="#bdbdbd"/><rect x="180" y="254.93" width="2" height="1" fill="#bdbdbd"/><rect x="180" y="260.41" width="2" height="1" fill="#bdbdbd"/><rect x="177.5" y="265.90" width="4.5" height="1" fill="#f0f0f0"/><rect x="180" y="271.39" width="2" height="1" fill="#bdbdbd"/><rect x="180" y="276.87" width="2" height="1" fill="#bdbdbd"/><rect x="180" y="282.36" width="2" height="1" fill="#bdbdbd"/><rect x="180" y="287.85" width="2" height="1" fill="#bdbdbd"/><rect x="177.5" y="293.33" width="4.5" height="1" fill="#f0f0f0"/><rect x="180" y="298.82" width="2" height="1" fill="#bdbdbd"/><rect x="180" y="304.31" width="2" height="1" fill="#bdbdbd"/><rect x="180" y="309.79" width="2" height="1" fill="#bdbdbd"/><rect x="180" y="315.28" width="2" height="1" fill="#bdbdbd"/><rect x="177.5" y="320.77" width="4.5" height="1" fill="#f0f0f0"/><rect x="180" y="326.25" width="2" height="1" fill="#bdbdbd"/><rect x="180" y="331.74" width="2" height="1" fill="#bdbdbd"/><rect x="180" y="337.23" width="2" height="1" fill="#bdbdbd"/><rect x="180" y="342.71" width="2" height="1" fill="#bdbdbd"/><rect x="177.5" y="348.20" width="4.5" height="1" fill="#f0f0f0"/><rect x="180" y="353.69" width="2" height="1" fill="#bdbdbd"/><rect x="180" y="359.17" width="2" height="1" fill="#bdbdbd"/><rect x="180" y="364.66" width="2" height="1" fill="#bdbdbd"/><rect x="180" y="370.15" width="2" height="1" fill="#bdbdbd"/><rect x="177.5" y="375.63" width="4.5" height="1" fill="#f0f0f0"/><rect x="180" y="381.12" width="2" height="1" fill="#bdbdbd"/><rect x="180" y="386.61" width="2" height="1" fill="#bdbdbd"/><rect x="180" y="392.10" width="2" height="1" fill="#bdbdbd"/><rect x="180" y="397.58" width="2" height="1" fill="#bdbdbd"/><rect x="177.5" y="403.07" width="4.5" height="1" fill="#f0f0f0"/><rect x="180" y="408.56" width="2" height="1" fill="#bdbdbd"/><rect x="180" y="414.04" width="2" height="1" fill="#bdbdbd"/><rect x="180" y="419.53" width="2" height="1" fill="#bdbdbd"/><rect x="180" y="425.02" width="2" height="1" fill="#bdbdbd"/><rect x="177.5" y="430.50" width="4.5" height="1" fill="#f0f0f0"/><rect x="180" y="435.99" width="2" height="1" fill="#bdbdbd"/><rect x="180" y="441.48" width="2" height="1" fill="#bdbdbd"/><rect x="180" y="446.96" width="2" height="1" fill="#bdbdbd"/><rect x="180" y="452.45" width="2" height="1" fill="#bdbdbd"/><rect x="177.5" y="457.94" width="4.5" height="1" fill="#f0f0f0"/><rect x="180" y="463.42" width="2" height="1" fill="#bdbdbd"/><rect x="180" y="468.91" width="2" height="1" fill="#bdbdbd"/></svg>
<svg style="left:0;top:0" width="700" height="480"><path d="M184.5 475 V84.5 H695" fill="none" stroke="#7a6eec" stroke-width="1" stroke-dasharray="4.6 4.17"/></svg>
<div style="left:186px;top:86px;width:21px;height:10px;background:#808080;"></div>
<span class="t" style="left:187.3px;top:87.5px;font-size:5.8px;line-height:7px;color:#ffffff;font-weight:700;transform:scaleX(0.9);transform-origin:left center;">Page 1</span>
<div style="left:201px;top:145px;width:414.4px;height:269.2px;background:#3e9efe;"></div>
<svg style="left:0;top:0" width="700" height="480"><rect x="201.5" y="145.2" width="414.5" height="269" fill="none" stroke="#2338e0" stroke-width="1" stroke-dasharray="4.1 4.8" stroke-dashoffset="-2"/></svg>
<div style="left:203px;top:146.5px;width:19px;height:9.3px;background:#808080;"></div>
<span class="t" style="left:204px;top:147.7px;font-size:5.8px;line-height:7px;color:#ffffff;font-weight:700;transform:scaleX(0.9);transform-origin:left center;">Item 1</span>
<div style="left:202.5px;top:404px;width:5px;height:8.5px;background:#8a8a8a;"></div>
<span class="t" style="left:203.8px;top:405.3px;font-size:5px;line-height:6px;color:#dddddd;">1</span>
<div style="left:199.2px;top:142.8px;width:4px;height:4px;background:#e02020;"></div>
<div style="left:200.2px;top:143.8px;width:2px;height:2px;background:#100000;"></div>
<div style="left:406.2px;top:142.8px;width:4px;height:4px;background:#e02020;"></div>
<div style="left:407.2px;top:143.8px;width:2px;height:2px;background:#100000;"></div>
<div style="left:614px;top:142.8px;width:4px;height:4px;background:#e02020;"></div>
<div style="left:615px;top:143.8px;width:2px;height:2px;background:#100000;"></div>
<div style="left:199.2px;top:277.4px;width:4px;height:4px;background:#e02020;"></div>
<div style="left:200.2px;top:278.4px;width:2px;height:2px;background:#100000;"></div>
<div style="left:614px;top:277.4px;width:4px;height:4px;background:#e02020;"></div>
<div style="left:615px;top:278.4px;width:2px;height:2px;background:#100000;"></div>
<div style="left:199.2px;top:412px;width:4px;height:4px;background:#e02020;"></div>
<div style="left:200.2px;top:413px;width:2px;height:2px;background:#100000;"></div>
<div style="left:406.2px;top:412px;width:4px;height:4px;background:#e02020;"></div>
<div style="left:407.2px;top:413px;width:2px;height:2px;background:#100000;"></div>
<div style="left:614px;top:412px;width:4px;height:4px;background:#e02020;"></div>
<div style="left:615px;top:413px;width:2px;height:2px;background:#100000;"></div>
<div style="left:695px;top:70px;width:8px;height:415px;background:#404040;"></div>
<div style="left:695px;top:71.5px;width:7.6px;height:9px;background:#444;border:1px solid #595959;"></div>
<svg style="left:696.5px;top:74.5px;" width="4.4" height="3.4" viewBox="0 0 5 4"><path d="M0 4 L2.5 0.5 L5 4 Z" fill="#ddd"/></svg>
<div style="left:695px;top:465.5px;width:8px;height:9.5px;background:#404040;border:1px solid #555;"></div>
<svg style="left:697px;top:469px;" width="4" height="3" viewBox="0 0 5 4"><path d="M0 0.5 L2.5 4 L5 0.5 Z" fill="#ddd"/></svg>
<div style="left:151px;top:475px;width:552px;height:8px;background:#3d3d3d;"></div>
<span class="t" style="left:171px;top:475.5px;font-size:5.8px;line-height:7px;color:#ffffff;">Cursor: 417:278</span>
<div style="left:229px;top:475px;width:56px;height:8px;background:#585858;"></div>
<span class="t" style="left:231px;top:475.2px;font-size:6.4px;line-height:8px;color:#ffffff;transform:scaleX(0.94);transform-origin:left center;">100%</span>
<svg style="left:287px;top:477.5px;" width="5" height="3" viewBox="0 0 5 3"><path d="M0 0 H5 L2.5 3 Z" fill="#fff"/></svg>
<svg style="left:296px;top:475.5px;" width="7" height="7" viewBox="0 0 7 7"><circle cx="3" cy="3" r="2.4" fill="none" stroke="#fff" stroke-width="0.8"/><path d="M4.8 4.8 L6.8 6.8" stroke="#fff" stroke-width="1"/><path d="M1.7 3 H4.3 M3 1.7 V4.3" stroke="#fff" stroke-width="0.9"/></svg>
<svg style="left:305px;top:475.5px;" width="7" height="7" viewBox="0 0 7 7"><circle cx="3" cy="3" r="2.4" fill="none" stroke="#fff" stroke-width="0.8"/><path d="M4.8 4.8 L6.8 6.8" stroke="#fff" stroke-width="1"/><path d="M1.7 3 H4.3 " stroke="#fff" stroke-width="0.9"/></svg>
<div style="left:294px;top:475px;width:1px;height:8px;background:#333;"></div>
<svg style="left:321px;top:477px;" width="5" height="4" viewBox="0 0 5 4"><path d="M0 0.5 H5 M0 2 H5 M0 3.5 H5" stroke="#ddd" stroke-width="0.8"/></svg>
<svg style="left:328px;top:481px;" width="2" height="2" viewBox="0 0 2 2"><path d="M2 0 V2 H0 Z" fill="#ddd"/></svg>
<div style="left:333px;top:475px;width:1px;height:8px;background:#333;"></div>
<svg style="left:341px;top:476.5px;" width="6" height="5" viewBox="0 0 6 5"><rect x="0" y="0" width="2" height="2" fill="#6db3e8"/><rect x="3.5" y="0" width="2" height="2" fill="#ddd"/><rect x="0" y="3" width="2" height="2" fill="#ddd"/><rect x="3.5" y="3" width="2" height="2" fill="#6db3e8"/></svg>
<svg style="left:349px;top:481px;" width="2" height="2" viewBox="0 0 2 2"><path d="M2 0 V2 H0 Z" fill="#ddd"/></svg>
<div style="left:354px;top:475px;width:1px;height:8px;background:#333;"></div>
<div style="left:357px;top:475px;width:338px;height:8px;background:#3a3a3a;"></div>
<div style="left:357px;top:475px;width:9px;height:8px;background:#3a3a3a;border:1px solid #4c4c4c;"></div>
<svg style="left:360px;top:477px;" width="3" height="4" viewBox="0 0 3 4"><path d="M3 0 L0.3 2 L3 4 Z" fill="#ddd"/></svg>
<div style="left:513px;top:475px;width:11px;height:8px;background:#6a6a6a;"></div>
<div style="left:685px;top:475px;width:9px;height:8px;background:#3a3a3a;border:1px solid #4c4c4c;"></div>
<svg style="left:688px;top:477px;" width="3" height="4" viewBox="0 0 3 4"><path d="M0 0 L2.7 2 L0 4 Z" fill="#ddd"/></svg>
<div style="left:695px;top:475px;width:8px;height:8px;background:#3a3a3a;border:1px solid #4c4c4c;"></div>
<div style="left:150.7px;top:483px;width:552.3px;height:2.1px;background:#838995;"></div>
<div style="left:153px;top:485.5px;width:38px;height:12px;background:#444444;"></div>
<span class="t" style="left:153px;top:487.8px;font-size:6.4px;line-height:8px;color:#ffffff;width:38px;text-align:center;transform:scaleX(0.94);transform-origin:center center;">Programming</span>
<div style="left:192px;top:485.5px;width:47px;height:12px;background:#2d2d2d;"></div>
<span class="t" style="left:192px;top:487.8px;font-size:6.4px;line-height:8px;color:#8a8a8a;width:47px;text-align:center;transform:scaleX(0.94);transform-origin:center center;">Resources</span>
<div style="left:240px;top:485.5px;width:44px;height:12px;background:#2d2d2d;"></div>
<span class="t" style="left:240px;top:487.8px;font-size:6.4px;line-height:8px;color:#8a8a8a;width:44px;text-align:center;transform:scaleX(0.94);transform-origin:center center;">Images</span>
<span class="t" style="left:155px;top:499.5px;font-size:6.4px;line-height:8px;color:#ffffff;transform:scaleX(0.94);transform-origin:left center;">Programming</span>
<svg style="left:681px;top:501px;" width="5" height="5" viewBox="0 0 5 5"><rect x="0.4" y="1.6" width="3" height="2.8" fill="none" stroke="#ddd" stroke-width="0.8"/><path d="M1.6 1.6 V0.4 H4.6 V3.2 H3.4" fill="none" stroke="#ddd" stroke-width="0.8"/></svg>
<svg style="left:695px;top:501px;" width="5" height="5" viewBox="0 0 5 5"><path d="M0.5 0.5 L4 4 M4 0.5 L0.5 4" stroke="#eee" stroke-width="1" fill="none"/></svg>
<div style="left:151px;top:508px;width:552px;height:1px;background:#3a3a3a;"></div>
<svg style="left:155px;top:512px;" width="3" height="5" viewBox="0 0 3 5"><path d="M0.5 0.5 L2.5 2.5 L0.5 4.5" stroke="#fff" stroke-width="0.8" fill="none"/></svg>
<span class="t" style="left:163px;top:511.0px;font-size:6.4px;line-height:8px;color:#ffffff;transform:scaleX(0.94);transform-origin:left center;">Relations</span>
<svg style="left:694px;top:513px;" width="5" height="5" viewBox="0 0 5 5"><path d="M2.5 0.3 V4.7 M0.3 2.5 H4.7" stroke="#2aa7e0" stroke-width="0.9"/></svg>
<div style="left:151px;top:520px;width:552px;height:1px;background:#3a3a3a;"></div>
<div style="left:702.9px;top:45px;width:2.2px;height:523px;background:#858b98;"></div>
<div style="left:706px;top:45px;width:347px;height:523px;background:#444444;"></div>
<div style="left:711px;top:46px;width:32px;height:12px;background:#444444;"></div>
<span class="t" style="left:711px;top:48.4px;font-size:6.4px;line-height:8px;color:#ffffff;width:32px;text-align:center;transform:scaleX(0.88);transform-origin:center center;">Devices</span>
<div style="left:748px;top:46px;width:44px;height:12px;background:#2d2d2d;"></div>
<span class="t" style="left:748px;top:48.4px;font-size:6.4px;line-height:8px;color:#8a8a8a;width:45px;text-align:center;transform:scaleX(0.94);transform-origin:center center;">Project tokens</span>
<div style="left:793px;top:46px;width:46px;height:12px;background:#2d2d2d;"></div>
<span class="t" style="left:793px;top:48.4px;font-size:6.4px;line-height:8px;color:#8a8a8a;width:46px;text-align:center;transform:scaleX(0.94);transform-origin:center center;">System tokens</span>
<span class="t" style="left:710px;top:60.7px;font-size:5.6px;line-height:7px;color:#ffffff;">Devices</span>
<svg style="left:1014px;top:62px;" width="4" height="4" viewBox="0 0 5 5"><rect x="0.4" y="1.6" width="3" height="2.8" fill="none" stroke="#ccc" stroke-width="0.8"/><path d="M1.6 1.6 V0.4 H4.6 V3.2 H3.4" fill="none" stroke="#ccc" stroke-width="0.8"/></svg>
<svg style="left:1028px;top:62px;" width="4" height="4" viewBox="0 0 5 5"><path d="M0.5 0.5 L4 4 M4 0.5 L0.5 4" stroke="#eee" stroke-width="1" fill="none"/></svg>
<svg style="left:713px;top:72px;" width="8" height="8" viewBox="0 0 8 8"><circle cx="4" cy="4" r="3.2" fill="none" stroke="#e6e6e6" stroke-width="0.9"/><path d="M4 2.2 V5.8 M2.2 4 H5.8" stroke="#e6e6e6" stroke-width="1"/></svg>
<svg style="left:730px;top:72px;" width="8" height="8" viewBox="0 0 8 8"><rect x="0.5" y="0.5" width="4" height="4.6" fill="none" stroke="#e6e6e6" stroke-width="0.9"/><rect x="2.6" y="2.4" width="4" height="4.6" fill="#444" stroke="#e6e6e6" stroke-width="0.9"/></svg>
<svg style="left:746px;top:72px;" width="7" height="8" viewBox="0 0 7 8"><path d="M0.3 1.5 H6.7" stroke="#e6e6e6" stroke-width="0.9"/><path d="M2.4 1.4 V0.4 H4.6 V1.4" stroke="#e6e6e6" stroke-width="0.7" fill="none"/><path d="M1 2.4 H6 L5.5 7.7 H1.5 Z" fill="#e6e6e6"/></svg>
<div style="left:759px;top:71px;width:1px;height:11px;background:#333;"></div>
<svg style="left:764px;top:72px;" width="9" height="9" viewBox="0 0 9 9"><path d="M4 0 V5 M2 3.2 L4 5.4 L6 3.2" stroke="#e6e6e6" stroke-width="1" fill="none"/><path d="M0.5 3 V7.5 H7.5 V3" stroke="#e6e6e6" stroke-width="0.7" fill="none"/></svg>
<svg style="left:780px;top:73px;" width="10" height="8" viewBox="0 0 10 8"><rect x="0.3" y="0.8" width="7.4" height="3.6" rx="0.6" fill="#e6e6e6"/><path d="M1.4 2.6 H4.6" stroke="#444" stroke-width="0.6"/><circle cx="7" cy="5" r="2" fill="#444" stroke="#e6e6e6" stroke-width="0.8"/><path d="M5.8 3.8 L8.2 6.2" stroke="#e6e6e6" stroke-width="0.6"/></svg>
<div style="left:795px;top:71px;width:1px;height:11px;background:#333;"></div>
<svg style="left:801px;top:72px;" width="6" height="9" viewBox="0 0 6 9"><path d="M3 0.5 V7.5 M0.8 5.2 L3 7.8 L5.2 5.2" stroke="#e6e6e6" stroke-width="1" fill="none"/></svg>
<svg style="left:817px;top:72px;" width="6" height="9" viewBox="0 0 6 9"><path d="M3 8 V1 M0.8 3.3 L3 0.7 L5.2 3.3" stroke="#e6e6e6" stroke-width="1" fill="none"/></svg>
<svg style="left:831px;top:71px;" width="10" height="10" viewBox="0 0 10 10"><path d="M1 9 L6.5 3.5 M6.5 3.5 L9 1 M4.8 2 L8 5.2" stroke="#e6e6e6" stroke-width="1.1" fill="none"/><path d="M1 1.5 L2 2.5 M3 0.5 L3.3 1.8 M0.5 4 L1.8 4" stroke="#e6e6e6" stroke-width="0.6"/></svg>
<svg style="left:848px;top:73px;" width="7" height="7" viewBox="0 0 7 7"><circle cx="2.6" cy="2.6" r="2" fill="none" stroke="#e6e6e6" stroke-width="0.9"/><path d="M4 4 L6.4 6.4" stroke="#e6e6e6" stroke-width="1.2"/></svg>
<div style="left:710px;top:87px;width:321px;height:215px;background:#444444;border:1px solid #4d4d4d;"></div>
<div style="left:716px;top:98px;width:1px;height:108px;background:#505050;"></div>
<div style="left:738px;top:118px;width:1px;height:80px;background:#505050;"></div>
<div style="left:738px;top:124px;width:6px;height:1px;background:#505050;"></div>
<svg style="left:713.3px;top:91px;" width="5" height="5" viewBox="0 0 5 5"><rect x="0.4" y="0.4" width="4.2" height="4.2" fill="none" stroke="#666" stroke-width="0.6"/><path d="M1.2 2.5 H3.8" stroke="#999" stroke-width="0.8"/></svg>
<svg style="left:723px;top:91px;" width="9" height="4" viewBox="0 0 9 4"><rect x="0" y="0" width="8.6" height="3.4" rx="0.5" fill="#e8e8e8"/><path d="M3 1.7 H4.2 M5 1.7 H6.2" stroke="#666" stroke-width="0.7"/><rect x="1" y="1" width="1.2" height="1.2" fill="#d03030"/></svg>
<span class="t" style="left:735px;top:89.0px;font-size:6.9px;line-height:9px;color:#ffffff;transform:scaleX(0.94);transform-origin:left center;">iRidium Server</span>
<svg style="left:724.3px;top:101px;" width="5" height="5" viewBox="0 0 5 5"><rect x="0.4" y="0.4" width="4.2" height="4.2" fill="none" stroke="#666" stroke-width="0.6"/><path d="M1.2 2.5 H3.8 M2.5 1.2 V3.8" stroke="#ccc" stroke-width="0.8"/></svg>
<span class="t" style="left:734px;top:99.0px;font-size:6.9px;line-height:9px;color:#ffffff;transform:scaleX(0.94);transform-origin:left center;">Tokens</span>
<svg style="left:724.3px;top:111px;" width="5" height="5" viewBox="0 0 5 5"><rect x="0.4" y="0.4" width="4.2" height="4.2" fill="none" stroke="#666" stroke-width="0.6"/><path d="M1.2 2.5 H3.8" stroke="#999" stroke-width="0.8"/></svg>
<svg style="left:734px;top:110px;" width="9" height="7" viewBox="0 0 9 7"><path d="M0.5 6.5 V0.6 H3.2 L4 1.6 H8.5 V6.5 Z" fill="none" stroke="#e0e0e0" stroke-width="0.8"/></svg>
<span class="t" style="left:746px;top:109.0px;font-size:6.9px;line-height:9px;color:#ffffff;transform:scaleX(0.94);transform-origin:left center;">Virtual</span>
<svg style="left:745px;top:120px;" width="9" height="8" viewBox="0 0 9 8"><path d="M0.5 7.5 V0.5 H6 V2 H8.5 V7.5 Z" fill="none" stroke="#ffffff" stroke-width="1"/><path d="M0.5 2.6 H6" stroke="#fff" stroke-width="0.8"/></svg>
<span class="t" style="left:757px;top:120.0px;font-size:6.9px;line-height:9px;color:#ffffff;transform:scaleX(0.94);transform-origin:left center;">Commands</span>
<svg style="left:736px;top:133px;" width="4" height="4" viewBox="0 0 4 4"><rect x="0.3" y="0.3" width="3.4" height="3.4" fill="none" stroke="#5a5a5a" stroke-width="0.6"/></svg>
<svg style="left:745px;top:131px;" width="9" height="8" viewBox="0 0 9 8"><path d="M0.5 7.5 V0.5 H6 V2 H8.5 V7.5 Z" fill="none" stroke="#ffffff" stroke-width="1"/><path d="M0.5 2.6 H6" stroke="#fff" stroke-width="0.8"/></svg>
<span class="t" style="left:757px;top:131.0px;font-size:6.9px;line-height:9px;color:#ffffff;transform:scaleX(0.94);transform-origin:left center;">Feedbacks</span>
<div style="left:754px;top:152.6px;width:276px;height:10.4px;background:#555555;"></div>
<svg style="left:757px;top:144.6px;" width="8" height="4" viewBox="0 0 8 4"><path d="M7 2 H1 M2.8 0.3 L0.8 2 L2.8 3.7" stroke="#7dc242" stroke-width="1.1" fill="none"/></svg>
<span class="t" style="left:768px;top:141.7px;font-size:6.9px;line-height:9px;color:#ffffff;transform:scaleX(0.94);transform-origin:left center;">Sinus(0-2)</span>
<svg style="left:757px;top:155.54999999999998px;" width="8" height="4" viewBox="0 0 8 4"><path d="M7 2 H1 M2.8 0.3 L0.8 2 L2.8 3.7" stroke="#7dc242" stroke-width="1.1" fill="none"/></svg>
<span class="t" style="left:768px;top:152.6px;font-size:6.9px;line-height:9px;color:#ffffff;transform:scaleX(0.94);transform-origin:left center;">(1) Cosinus</span>
<svg style="left:757px;top:166.5px;" width="8" height="4" viewBox="0 0 8 4"><path d="M7 2 H1 M2.8 0.3 L0.8 2 L2.8 3.7" stroke="#7dc242" stroke-width="1.1" fill="none"/></svg>
<span class="t" style="left:768px;top:163.6px;font-size:6.9px;line-height:9px;color:#ffffff;transform:scaleX(0.94);transform-origin:left center;">Sin2(0-1000)</span>
<svg style="left:757px;top:177.45px;" width="8" height="4" viewBox="0 0 8 4"><path d="M7 2 H1 M2.8 0.3 L0.8 2 L2.8 3.7" stroke="#7dc242" stroke-width="1.1" fill="none"/></svg>
<span class="t" style="left:768px;top:174.5px;font-size:6.9px;line-height:9px;color:#ffffff;transform:scaleX(0.94);transform-origin:left center;">5-40</span>
<svg style="left:757px;top:188.4px;" width="8" height="4" viewBox="0 0 8 4"><path d="M7 2 H1 M2.8 0.3 L0.8 2 L2.8 3.7" stroke="#7dc242" stroke-width="1.1" fill="none"/></svg>
<span class="t" style="left:768px;top:185.5px;font-size:6.9px;line-height:9px;color:#ffffff;transform:scaleX(0.94);transform-origin:left center;">0-100</span>
<div style="left:748px;top:140px;width:1px;height:50px;background:#5a5a5a;"></div>
<div style="left:748px;top:147px;width:6px;height:1px;background:#5a5a5a;"></div>
<div style="left:748px;top:158px;width:6px;height:1px;background:#5a5a5a;"></div>
<div style="left:748px;top:169px;width:6px;height:1px;background:#5a5a5a;"></div>
<div style="left:748px;top:180px;width:6px;height:1px;background:#5a5a5a;"></div>
<div style="left:748px;top:191px;width:6px;height:1px;background:#5a5a5a;"></div>
<svg style="left:736px;top:199px;" width="5" height="5" viewBox="0 0 5 5"><rect x="0.4" y="0.4" width="4.2" height="4.2" fill="none" stroke="#666" stroke-width="0.6"/><path d="M1.2 2.5 H3.8 M2.5 1.2 V3.8" stroke="#ccc" stroke-width="0.8"/></svg>
<svg style="left:745px;top:198px;" width="9" height="7" viewBox="0 0 9 7"><path d="M0.5 6.5 V0.6 H3.2 L4 1.6 H8.5 V6.5 Z" fill="none" stroke="#e0e0e0" stroke-width="0.8"/></svg>
<span class="t" style="left:757px;top:197.3px;font-size:6.9px;line-height:9px;color:#ffffff;transform:scaleX(0.94);transform-origin:left center;">дискретные</span>
<svg style="left:723px;top:210px;" width="9" height="4" viewBox="0 0 9 4"><rect x="0" y="0" width="8.6" height="3.4" rx="0.5" fill="#e8e8e8"/><path d="M3 1.7 H4.2 M5 1.7 H6.2" stroke="#666" stroke-width="0.7"/><rect x="1" y="1" width="1.2" height="1.2" fill="#d03030"/></svg>
<span class="t" style="left:735px;top:208.3px;font-size:6.9px;line-height:9px;color:#ffffff;transform:scaleX(0.94);transform-origin:left center;">iRidium Server 1</span>
<div style="left:710px;top:304px;width:321px;height:260px;background:#444444;border:1px solid #4d4d4d;"></div>
<svg style="left:718px;top:309px;" width="4" height="3" viewBox="0 0 4 3"><path d="M0.3 0.3 L2 2.2 L3.7 0.3" stroke="#ddd" stroke-width="0.8" fill="none"/></svg>
<span class="t" style="left:729px;top:307.0px;font-size:6.9px;line-height:9px;color:#ffffff;transform:scaleX(0.94);transform-origin:left center;">Properties</span>
<span class="t" style="left:713px;top:320.8px;font-size:6.9px;line-height:9px;color:#ffffff;transform:scaleX(0.94);transform-origin:left center;">Name</span>
<span class="t" style="left:795px;top:320.8px;font-size:6.9px;line-height:9px;color:#ffffff;transform:scaleX(0.94);transform-origin:left center;">Cosinus</span>
<div style="left:711px;top:331px;width:319px;height:1px;background:#3d3d3d;"></div>
<span class="t" style="left:713px;top:332.4px;font-size:6.9px;line-height:9px;color:#ffffff;transform:scaleX(0.94);transform-origin:left center;">Full name</span>
<span class="t" style="left:795px;top:332.4px;font-size:6.9px;line-height:9px;color:#ffffff;transform:scaleX(0.94);transform-origin:left center;">iRidium Server.Cosinus</span>
<div style="left:711px;top:342px;width:319px;height:1px;background:#3d3d3d;"></div>
<span class="t" style="left:713px;top:343.4px;font-size:6.9px;line-height:9px;color:#ffffff;transform:scaleX(0.94);transform-origin:left center;">Description</span>
<span class="t" style="left:795px;top:343.4px;font-size:6.9px;line-height:9px;color:#ffffff;transform:scaleX(0.94);transform-origin:left center;"></span>
<div style="left:711px;top:352px;width:319px;height:1px;background:#3d3d3d;"></div>
<span class="t" style="left:713px;top:354.4px;font-size:6.9px;line-height:9px;color:#ffffff;transform:scaleX(0.94);transform-origin:left center;">Save Value When Disco...</span>
<span class="t" style="left:795px;top:354.4px;font-size:6.9px;line-height:9px;color:#ffffff;transform:scaleX(0.94);transform-origin:left center;">False</span>
<div style="left:711px;top:363px;width:319px;height:1px;background:#3d3d3d;"></div>
<span class="t" style="left:713px;top:365.3px;font-size:6.9px;line-height:9px;color:#ffffff;transform:scaleX(0.94);transform-origin:left center;">Tags</span>
<span class="t" style="left:795px;top:365.3px;font-size:6.9px;line-height:9px;color:#ffffff;transform:scaleX(0.94);transform-origin:left center;"></span>
<div style="left:711px;top:374px;width:319px;height:1px;background:#3d3d3d;"></div>
<div style="left:793px;top:320px;width:1px;height:55px;background:#3b3b3b;"></div>
<span class="t" style="left:877px;top:517.5px;font-size:10.9px;line-height:14px;color:#8e8e8e;">Activate Windows</span>
<span class="t" style="left:877px;top:532.5px;font-size:8.1px;line-height:10px;color:#8e8e8e;">Go to Settings to activate Windows.</span>
<div style="left:1033px;top:45px;width:20px;height:523px;background:#444444;"></div>
<div style="left:1035.5px;top:45px;width:17px;height:9px;background:#000;"></div>
<svg style="left:1041.5px;top:47px;" width="5" height="3" viewBox="0 0 5 3"><path d="M0 0 H5 L2.5 3 Z" fill="#fff"/></svg>
<div style="left:1035.5px;top:56px;width:17.5px;height:17px;background:#000;"></div>
<svg style="left:1038.5px;top:59px;" width="11" height="11" viewBox="0 0 11 11"><rect x="2" y="0.5" width="2.4" height="2.4" fill="#7ac143"/><path d="M3.2 3 V9 H6 M3.2 5.5 H6" stroke="#7ac143" stroke-width="0.9" fill="none"/><rect x="6" y="4" width="3.4" height="2.6" fill="#7ac143"/><rect x="6" y="7.6" width="3.4" height="2.6" fill="#7ac143"/></svg>
<div style="left:1035.5px;top:75px;width:17.5px;height:17px;background:#000;"></div>
<svg style="left:1038.5px;top:78px;" width="11" height="11" viewBox="0 0 11 11"><rect x="2.2" y="2.2" width="6.6" height="6.6" fill="none" stroke="#7ac143" stroke-width="1"/><rect x="4" y="4" width="3" height="3" fill="#7ac143"/><path d="M0.8 3.5 H2 M0.8 5.5 H2 M0.8 7.5 H2 M9 3.5 H10.2 M9 5.5 H10.2 M9 7.5 H10.2" stroke="#7ac143" stroke-width="0.7"/></svg>
<div style="left:1035.5px;top:94px;width:17.5px;height:17px;background:#000;"></div>
<svg style="left:1038.5px;top:97px;" width="11" height="11" viewBox="0 0 11 11"><rect x="1" y="1.5" width="9" height="8" fill="none" stroke="#4aa8dc" stroke-width="1.1"/><path d="M3 4 L5 5.5 L3 7 M5.8 7.4 H8" stroke="#4aa8dc" stroke-width="0.9" fill="none"/></svg>
<div style="left:1035.5px;top:112px;width:17px;height:1px;background:#555;"></div>
<div style="left:1035.5px;top:114px;width:17.5px;height:17px;background:#000;"></div>
<svg style="left:1038.5px;top:117px;" width="11" height="11" viewBox="0 0 11 11"><path d="M1.5 1.5 H5 V5 H1.5 Z M6.5 1.5 H9.5 V4 M1.5 6.5 V9.5 H4 M6 6 H7.5 V7.5 H9.5 V9.5 H6 Z" fill="none" stroke="#ddd" stroke-width="0.9"/><rect x="2.6" y="2.6" width="1.3" height="1.3" fill="#ddd"/></svg>
<div style="left:1035.5px;top:133px;width:17.5px;height:17px;background:#000;"></div>
<svg style="left:1038.5px;top:136px;" width="11" height="11" viewBox="0 0 11 11"><path d="M5 1.5 L8.5 5 L5 8.5 L1.5 5 Z" fill="none" stroke="#fff" stroke-width="1.3"/><path d="M6 8.8 H10" stroke="#fff" stroke-width="1"/><circle cx="9.3" cy="7" r="0.9" fill="#fff"/></svg>
<div style="left:1035.5px;top:152px;width:17px;height:17px;background:#000;"></div>
<span class="t" style="left:1035.5px;top:156.5px;font-size:6.5px;line-height:8px;color:#ff8c1a;font-weight:700;width:17px;text-align:center;">JS</span>
<div style="left:1035.5px;top:171px;width:17.5px;height:17px;background:#000;"></div>
<svg style="left:1038.5px;top:174px;" width="11" height="11" viewBox="0 0 11 11"><rect x="1.5" y="1.5" width="8" height="8" fill="none" stroke="#fff" stroke-width="1.1"/><path d="M2.5 8.5 L5 5.5 L6.5 7 L8.5 4.5 V8.5 Z" fill="#fff"/><path d="M5.5 2.5 H8.5 V5" stroke="#fff" stroke-width="0.8" fill="none"/></svg>
<div style="left:1035.5px;top:189px;width:17px;height:1px;background:#555;"></div>
<div style="left:1035.5px;top:191px;width:17.5px;height:17px;background:#000;"></div>
<svg style="left:1038.5px;top:194px;" width="11" height="11" viewBox="0 0 11 11"><path d="M4.5 1.5 L8 5 L4.5 8.5 L1 5 Z" fill="none" stroke="#fff" stroke-width="1.3"/><circle cx="8.7" cy="8.2" r="1.4" fill="none" stroke="#fff" stroke-width="0.8"/></svg>
<div style="left:1035.5px;top:210px;width:17.5px;height:17px;background:#000;"></div>
<svg style="left:1038.5px;top:213px;" width="11" height="11" viewBox="0 0 11 11"><path d="M2.6 8.5 A2 2 0 0 1 2.6 4.6 A3 3 0 0 1 8.2 4.4 A2.1 2.1 0 0 1 8.4 8.5 Z" fill="none" stroke="#fff" stroke-width="1.2"/></svg>
<div style="left:1035.5px;top:229px;width:17.5px;height:17px;background:#000;"></div>
<svg style="left:1038.5px;top:232px;" width="11" height="11" viewBox="0 0 11 11"><rect x="2" y="1" width="4" height="4" fill="#3a6f95"/><path d="M5.5 1 V7 M3.2 4.8 L5.5 7.2 L7.8 4.8" stroke="#fff" stroke-width="1" fill="none"/><path d="M1.5 6 V9.5 H9.5 V6" stroke="#aaa" stroke-width="0.8" fill="none"/></svg>
<div style="left:1035.5px;top:247px;width:17px;height:1px;background:#555;"></div>
<div style="left:1035.5px;top:249px;width:17.5px;height:17px;background:#000;"></div>
<svg style="left:1038.5px;top:252px;" width="11" height="11" viewBox="0 0 11 11"><path d="M0.8 3 H3 L3.8 1.8 H7.2 L8 3 H10.2 V9.2 H0.8 Z" fill="#fff"/><circle cx="5.5" cy="6" r="1.9" fill="#000"/><circle cx="5.5" cy="6" r="0.9" fill="#fff"/></svg>
<div style="left:1035.5px;top:268px;width:17.5px;height:17px;background:#000;"></div>
<svg style="left:1038.5px;top:271px;" width="11" height="11" viewBox="0 0 11 11"><rect x="1" y="1.5" width="9" height="8" fill="none" stroke="#fff" stroke-width="1.1"/><path d="M1 3.6 H10" stroke="#fff" stroke-width="1.2"/><path d="M5 6 H8.5 M5 7.8 H8.5" stroke="#fff" stroke-width="0.8"/></svg>
<div style="left:1035.5px;top:287px;width:17.5px;height:17px;background:#000;"></div>
<svg style="left:1038.5px;top:290px;" width="11" height="11" viewBox="0 0 11 11"><path d="M3.6 8.5 V2.2 L9 1 V7.4" fill="none" stroke="#fff" stroke-width="1.1"/><ellipse cx="2.5" cy="8.6" rx="1.5" ry="1.1" fill="#fff"/><ellipse cx="7.9" cy="7.5" rx="1.5" ry="1.1" fill="#fff"/></svg>
<div style="left:333px;top:161px;width:384px;height:209px;background:#444;box-shadow:0 2px 11px rgba(0,0,0,0.42);"></div>
<div style="left:333px;top:161px;width:384px;height:17px;background:#ffffff;"></div>
<svg style="left:338px;top:165px;" width="8" height="9" viewBox="0 0 8 9"><rect x="0" y="0" width="8" height="9" rx="1.6" fill="#1565c0"/><path d="M2 2.2 L6 6.8 M6 2.2 L2 6.8" stroke="#fff" stroke-width="1.1" stroke-linecap="round"/></svg>
<span class="t" style="left:349.5px;top:165.8px;font-size:6.5px;line-height:8px;color:#1c1c24;">Line chart settings</span>
<svg style="left:706px;top:166px;" width="6" height="6" viewBox="0 0 6 6"><path d="M0.5 0.5 L5.5 5.5 M5.5 0.5 L0.5 5.5" stroke="#444" stroke-width="0.7"/></svg>
<div style="left:333px;top:178px;width:384px;height:12px;background:#2d2d2d;"></div>
<div style="left:333px;top:178px;width:384px;height:1px;background:#111;"></div>
<span class="t" style="left:333px;top:180.5px;font-size:6.3px;line-height:8px;color:#8a8a8a;width:77px;text-align:center;">Chart lines</span>
<span class="t" style="left:410px;top:180.5px;font-size:6.3px;line-height:8px;color:#8a8a8a;width:77px;text-align:center;">Chart area</span>
<div style="left:410px;top:178px;width:1px;height:12px;background:#262626;"></div>
<div style="left:487px;top:178px;width:77px;height:12px;background:#444444;"></div>
<span class="t" style="left:487px;top:180.5px;font-size:6.3px;line-height:8px;color:#ffffff;width:77px;text-align:center;">Gridlines</span>
<span class="t" style="left:563px;top:180.5px;font-size:6.3px;line-height:8px;color:#8a8a8a;width:77px;text-align:center;">Horizontal axis</span>
<span class="t" style="left:640px;top:180.5px;font-size:6.3px;line-height:8px;color:#8a8a8a;width:77px;text-align:center;">Vertical axis</span>
<div style="left:640px;top:178px;width:1px;height:12px;background:#262626;"></div>
<div style="left:341px;top:204px;width:183px;height:127px;border:1px solid #505050;"></div>
<span class="t" style="left:345px;top:208.1px;font-size:7.3px;line-height:9px;color:#8c8c8c;">Vertical gridlines (time marks)</span>
<div style="left:346px;top:229.8px;width:7px;height:7px;background:#efefef;"></div>
<svg style="left:346px;top:229.8px;" width="7" height="7" viewBox="0 0 7 7"><path d="M1.3 3.5 L2.8000000000000003 5.6000000000000005 L6 1.05" stroke="#999" stroke-width="0.8" fill="none"/></svg>
<span class="t" style="left:358px;top:229.0px;font-size:7.3px;line-height:9px;color:#ffffff;">Major gridlines</span>
<span class="t" style="left:345px;top:245.5px;font-size:7.3px;line-height:9px;color:#ffffff;">Color</span>
<div style="left:373px;top:244px;width:21px;height:11px;background:#444;border:1px solid #5a5a5a;"></div>
<div style="left:374px;top:245px;width:10px;height:9px;background:#c4c4c4;"></div>
<svg style="left:387px;top:248.5px;" width="4" height="3" viewBox="0 0 4 3"><path d="M0 0 H4 L2 2.6 Z" fill="#fff"/></svg>
<span class="t" style="left:446px;top:245.5px;font-size:7.3px;line-height:9px;color:#ffffff;">Width</span>
<div style="left:475px;top:244px;width:45px;height:11px;background:#555;border:1px solid #4a4a4a;"></div>
<span class="t" style="left:475px;top:245.5px;font-size:7.3px;line-height:9px;color:#ffffff;width:34px;text-align:center;">1 px</span>
<div style="left:509px;top:244px;width:11px;height:11px;background:#444;border:1px solid #4a4a4a;"></div>
<svg style="left:512px;top:245.5px;" width="5" height="8" viewBox="0 0 5 8"><path d="M0.5 3 L2.5 0.6 L4.5 3 Z M0.5 5 L2.5 7.4 L4.5 5 Z" fill="#fff"/></svg>
<div style="left:345px;top:270px;width:175px;height:1px;background:#3a3a3a;"></div>
<div style="left:346px;top:278.5px;width:7px;height:7px;background:#9a9a9a;"></div>
<span class="t" style="left:358px;top:278.0px;font-size:7.3px;line-height:9px;color:#ffffff;">Minor gridlines</span>
<span class="t" style="left:345px;top:294.5px;font-size:7.3px;line-height:9px;color:#555555;">Minor gridlines quantity</span>
<div style="left:475px;top:293px;width:45px;height:11px;background:#484848;border:1px solid #505050;"></div>
<span class="t" style="left:475px;top:294.5px;font-size:7.3px;line-height:9px;color:#7a7a7a;width:34px;text-align:center;">1</span>
<svg style="left:512px;top:294.5px;" width="5" height="8" viewBox="0 0 5 8"><path d="M0.5 3 L2.5 0.6 L4.5 3 Z M0.5 5 L2.5 7.4 L4.5 5 Z" fill="#888"/></svg>
<div style="left:509px;top:293px;width:1px;height:11px;background:#505050;"></div>
<span class="t" style="left:345px;top:311.0px;font-size:7.3px;line-height:9px;color:#555555;">Color</span>
<div style="left:373px;top:310px;width:21px;height:11px;background:#444;border:1px solid #525252;"></div>
<div style="left:374px;top:311px;width:10px;height:9px;background:#c4c4c4;"></div>
<svg style="left:387px;top:314.5px;" width="4" height="3" viewBox="0 0 4 3"><path d="M0 0 H4 L2 2.6 Z" fill="#999"/></svg>
<span class="t" style="left:446px;top:311.0px;font-size:7.3px;line-height:9px;color:#555555;">Width</span>
<div style="left:475px;top:310px;width:45px;height:11px;background:#484848;border:1px solid #505050;"></div>
<span class="t" style="left:475px;top:311.0px;font-size:7.3px;line-height:9px;color:#7a7a7a;width:34px;text-align:center;">1 px</span>
<svg style="left:512px;top:311.5px;" width="5" height="8" viewBox="0 0 5 8"><path d="M0.5 3 L2.5 0.6 L4.5 3 Z M0.5 5 L2.5 7.4 L4.5 5 Z" fill="#888"/></svg>
<div style="left:509px;top:310px;width:1px;height:11px;background:#505050;"></div>
<div style="left:527px;top:204px;width:183px;height:127px;border:1px solid #505050;"></div>
<span class="t" style="left:531px;top:208.1px;font-size:7.3px;line-height:9px;color:#8c8c8c;">Horizontal gridlines (value marks)</span>
<div style="left:532px;top:229.8px;width:7px;height:7px;background:#efefef;"></div>
<svg style="left:532px;top:229.8px;" width="7" height="7" viewBox="0 0 7 7"><path d="M1.3 3.5 L2.8000000000000003 5.6000000000000005 L6 1.05" stroke="#999" stroke-width="0.8" fill="none"/></svg>
<span class="t" style="left:544px;top:229.0px;font-size:7.3px;line-height:9px;color:#ffffff;">Major gridlines</span>
<span class="t" style="left:531px;top:245.5px;font-size:7.3px;line-height:9px;color:#ffffff;">Color</span>
<div style="left:559px;top:244px;width:21px;height:11px;background:#444;border:1px solid #5a5a5a;"></div>
<div style="left:560px;top:245px;width:10px;height:9px;background:#c4c4c4;"></div>
<svg style="left:573px;top:248.5px;" width="4" height="3" viewBox="0 0 4 3"><path d="M0 0 H4 L2 2.6 Z" fill="#fff"/></svg>
<span class="t" style="left:632px;top:245.5px;font-size:7.3px;line-height:9px;color:#ffffff;">Width</span>
<div style="left:661px;top:244px;width:45px;height:11px;background:#555;border:1px solid #4a4a4a;"></div>
<span class="t" style="left:661px;top:245.5px;font-size:7.3px;line-height:9px;color:#ffffff;width:34px;text-align:center;">1 px</span>
<div style="left:695px;top:244px;width:11px;height:11px;background:#444;border:1px solid #4a4a4a;"></div>
<svg style="left:698px;top:245.5px;" width="5" height="8" viewBox="0 0 5 8"><path d="M0.5 3 L2.5 0.6 L4.5 3 Z M0.5 5 L2.5 7.4 L4.5 5 Z" fill="#fff"/></svg>
<div style="left:531px;top:270px;width:175px;height:1px;background:#3a3a3a;"></div>
<div style="left:532px;top:278.5px;width:7px;height:7px;background:#9a9a9a;"></div>
<span class="t" style="left:544px;top:278.0px;font-size:7.3px;line-height:9px;color:#ffffff;">Minor gridlines</span>
<span class="t" style="left:531px;top:294.5px;font-size:7.3px;line-height:9px;color:#555555;">Minor gridlines quantity</span>
<div style="left:661px;top:293px;width:45px;height:11px;background:#484848;border:1px solid #505050;"></div>
<span class="t" style="left:661px;top:294.5px;font-size:7.3px;line-height:9px;color:#7a7a7a;width:34px;text-align:center;">1</span>
<svg style="left:698px;top:294.5px;" width="5" height="8" viewBox="0 0 5 8"><path d="M0.5 3 L2.5 0.6 L4.5 3 Z M0.5 5 L2.5 7.4 L4.5 5 Z" fill="#888"/></svg>
<div style="left:695px;top:293px;width:1px;height:11px;background:#505050;"></div>
<span class="t" style="left:531px;top:311.0px;font-size:7.3px;line-height:9px;color:#555555;">Color</span>
<div style="left:559px;top:310px;width:21px;height:11px;background:#444;border:1px solid #525252;"></div>
<div style="left:560px;top:311px;width:10px;height:9px;background:#c4c4c4;"></div>
<svg style="left:573px;top:314.5px;" width="4" height="3" viewBox="0 0 4 3"><path d="M0 0 H4 L2 2.6 Z" fill="#999"/></svg>
<span class="t" style="left:632px;top:311.0px;font-size:7.3px;line-height:9px;color:#555555;">Width</span>
<div style="left:661px;top:310px;width:45px;height:11px;background:#484848;border:1px solid #505050;"></div>
<span class="t" style="left:661px;top:311.0px;font-size:7.3px;line-height:9px;color:#7a7a7a;width:34px;text-align:center;">1 px</span>
<svg style="left:698px;top:311.5px;" width="5" height="8" viewBox="0 0 5 8"><path d="M0.5 3 L2.5 0.6 L4.5 3 Z M0.5 5 L2.5 7.4 L4.5 5 Z" fill="#888"/></svg>
<div style="left:695px;top:310px;width:1px;height:11px;background:#505050;"></div>
<div style="left:339px;top:343px;width:77px;height:23px;border:2px solid #fdf500;"></div>
<div style="left:342.5px;top:352px;width:6px;height:6px;background:#efefef;"></div>
<svg style="left:342.5px;top:352px;" width="6" height="6" viewBox="0 0 6 6"><path d="M1.3 3.0 L2.4000000000000004 4.800000000000001 L5 0.8999999999999999" stroke="#999" stroke-width="0.8" fill="none"/></svg>
<span class="t" style="left:354px;top:351.0px;font-size:6.9px;line-height:9px;color:#2b90d9;">Advanced settings</span>
<div style="left:341px;top:363px;width:74px;height:1px;background:#1c2340;"></div>
<div style="left:617px;top:349px;width:45px;height:13px;background:#6a6a6a;"></div>
<span class="t" style="left:617px;top:351.0px;font-size:6.8px;line-height:9px;color:#ffffff;width:45px;text-align:center;">OK</span>
<div style="left:665px;top:349px;width:45px;height:13px;background:#6a6a6a;"></div>
<span class="t" style="left:665px;top:351.0px;font-size:6.8px;line-height:9px;color:#ffffff;width:45px;text-align:center;">Cancel</span>
</body></html>
